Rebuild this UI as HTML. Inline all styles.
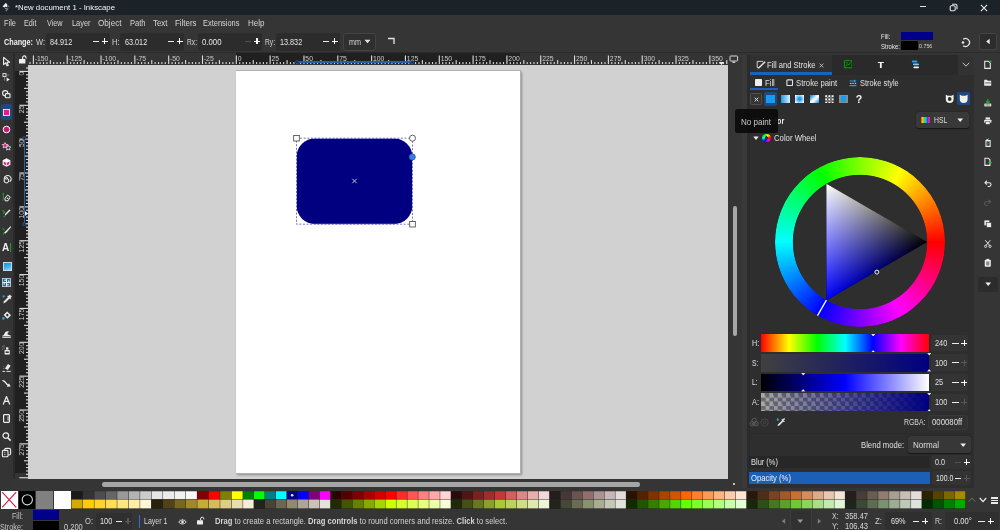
<!DOCTYPE html>
<html><head><meta charset="utf-8"><title>New document 1 - Inkscape</title>
<style>
html,body{margin:0;padding:0;background:#353535;}
body{width:1000px;height:530px;position:relative;overflow:hidden;font-family:"Liberation Sans",sans-serif;}
.r{position:absolute;display:block;}
.t{position:absolute;white-space:nowrap;filter:grayscale(1);}
</style></head><body>
<div class="r" style="left:0.00px;top:0.00px;width:1000.00px;height:14.50px;background:#1c222a;"></div>
<div class="r" style="left:0.00px;top:14.50px;width:1000.00px;height:38.00px;background:#353535;"></div>
<div class="r" style="left:0.00px;top:51.80px;width:1000.00px;height:1.20px;background:#2b2b2b;"></div>
<svg class="r" style="left:1.50px;top:2.00px;" width="10" height="10" viewBox="0 0 10 10"><path d="M3.9 0.7 L0.6 4.6 L2.4 5.5 L3.8 4.5 L5 5.5 L5.5 3.3 Z" fill="#f2f2f2"/><path d="M3.9 0.7 L5.5 3.3 L5 5.5 L6.6 4.9 L8.5 5.6 Z" fill="#4e5f82"/><path d="M2.4 6.5 L5.8 6 L6.6 7.1 L4.4 9.5 L3 8.3 L4.6 7.6 Z" fill="#70747a"/><path d="M2.6 6.4 L4.4 5.9 L4 6.8Z" fill="#d8d8d8"/></svg>
<div class="t" style="left:15.30px;top:1.90px;font-size:8.00px;line-height:12px;color:#f4f4f4;transform-origin:0 50%;transform:scaleX(0.9778);">*New document 1 - Inkscape</div>
<div class="r" style="left:920.00px;top:6.30px;width:6.20px;height:1.10px;background:#e4e4e4;"></div>
<svg class="r" style="left:948.50px;top:3.00px;" width="9" height="9" viewBox="0 0 9 9"><rect x="1.2" y="2.8" width="5" height="5" rx="1.2" fill="none" stroke="#e4e4e4" stroke-width="1.1"/><path d="M3 1.3 H6.6 A1.4 1.4 0 0 1 8 2.7 V6.2" fill="none" stroke="#e4e4e4" stroke-width="1.1"/></svg>
<svg class="r" style="left:980.00px;top:3.60px;" width="8" height="8" viewBox="0 0 8 8"><path d="M0.9 0.9 L7.1 7.1 M7.1 0.9 L0.9 7.1" stroke="#ececec" stroke-width="1.1" fill="none"/></svg>
<div class="t" style="left:4.20px;top:16.90px;font-size:8.80px;line-height:12px;color:#d6d6d6;transform-origin:0 50%;transform:scaleX(0.8462);">File</div>
<div class="t" style="left:24.00px;top:16.90px;font-size:8.80px;line-height:12px;color:#d6d6d6;transform-origin:0 50%;transform:scaleX(0.8243);">Edit</div>
<div class="t" style="left:46.50px;top:16.90px;font-size:8.80px;line-height:12px;color:#d6d6d6;transform-origin:0 50%;transform:scaleX(0.8194);">View</div>
<div class="t" style="left:71.50px;top:16.90px;font-size:8.80px;line-height:12px;color:#d6d6d6;transform-origin:0 50%;transform:scaleX(0.8404);">Layer</div>
<div class="t" style="left:98.00px;top:16.90px;font-size:8.80px;line-height:12px;color:#d6d6d6;transform-origin:0 50%;transform:scaleX(0.9240);">Object</div>
<div class="t" style="left:129.50px;top:16.90px;font-size:8.80px;line-height:12px;color:#d6d6d6;transform-origin:0 50%;transform:scaleX(0.8562);">Path</div>
<div class="t" style="left:152.50px;top:16.90px;font-size:8.80px;line-height:12px;color:#d6d6d6;transform-origin:0 50%;transform:scaleX(0.8984);">Text</div>
<div class="t" style="left:174.50px;top:16.90px;font-size:8.80px;line-height:12px;color:#d6d6d6;transform-origin:0 50%;transform:scaleX(0.8975);">Filters</div>
<div class="t" style="left:203.00px;top:16.90px;font-size:8.80px;line-height:12px;color:#d6d6d6;transform-origin:0 50%;transform:scaleX(0.8479);">Extensions</div>
<div class="t" style="left:247.50px;top:16.90px;font-size:8.80px;line-height:12px;color:#d6d6d6;transform-origin:0 50%;transform:scaleX(0.9116);">Help</div>
<div class="t" style="left:4.00px;top:35.70px;font-size:8.60px;line-height:12px;color:#f0f0f0;font-weight:bold;transform-origin:0 50%;transform:scaleX(0.8430);">Change:</div>
<div class="t" style="left:35.50px;top:35.70px;font-size:8.60px;line-height:12px;color:#d6d6d6;transform-origin:0 50%;transform:scaleX(0.8695);">W:</div>
<div class="r" style="left:46.00px;top:33.00px;width:63.60px;height:17.60px;background:#2c2c2c;border-radius:2.5px;"></div>
<div class="t" style="left:49.50px;top:35.70px;font-size:8.60px;line-height:12px;color:#e6e6e6;transform-origin:0 50%;transform:scaleX(0.8440);">84.912</div>
<div class="r" style="left:92.50px;top:40.80px;width:6.40px;height:1.20px;background:#ececec;"></div>
<div class="r" style="left:101.70px;top:40.80px;width:6.20px;height:1.20px;background:#ffffff;"></div>
<div class="r" style="left:104.20px;top:38.30px;width:1.20px;height:6.20px;background:#ffffff;"></div>
<div class="t" style="left:112.00px;top:35.70px;font-size:8.60px;line-height:12px;color:#d6d6d6;transform-origin:0 50%;transform:scaleX(0.8721);">H:</div>
<div class="r" style="left:120.30px;top:33.00px;width:64.00px;height:17.60px;background:#2c2c2c;border-radius:2.5px;"></div>
<div class="t" style="left:124.50px;top:35.70px;font-size:8.60px;line-height:12px;color:#e6e6e6;transform-origin:0 50%;transform:scaleX(0.8440);">63.012</div>
<div class="r" style="left:167.50px;top:40.80px;width:6.40px;height:1.20px;background:#ececec;"></div>
<div class="r" style="left:176.70px;top:40.80px;width:6.20px;height:1.20px;background:#ffffff;"></div>
<div class="r" style="left:179.20px;top:38.30px;width:1.20px;height:6.20px;background:#ffffff;"></div>
<div class="t" style="left:187.00px;top:35.70px;font-size:8.60px;line-height:12px;color:#d6d6d6;transform-origin:0 50%;transform:scaleX(0.7752);">Rx:</div>
<div class="r" style="left:197.60px;top:33.00px;width:64.00px;height:17.60px;background:#2c2c2c;border-radius:2.5px;"></div>
<div class="t" style="left:202.00px;top:35.70px;font-size:8.60px;line-height:12px;color:#e6e6e6;transform-origin:0 50%;transform:scaleX(0.9061);">0.000</div>
<div class="r" style="left:244.70px;top:40.80px;width:6.40px;height:1.20px;background:#525252;"></div>
<div class="r" style="left:253.90px;top:40.80px;width:6.20px;height:1.20px;background:#ffffff;"></div>
<div class="r" style="left:256.40px;top:38.30px;width:1.20px;height:6.20px;background:#ffffff;"></div>
<div class="t" style="left:265.00px;top:35.70px;font-size:8.60px;line-height:12px;color:#d6d6d6;transform-origin:0 50%;transform:scaleX(0.7752);">Ry:</div>
<div class="r" style="left:275.60px;top:33.00px;width:64.00px;height:17.60px;background:#2c2c2c;border-radius:2.5px;"></div>
<div class="t" style="left:279.50px;top:35.70px;font-size:8.60px;line-height:12px;color:#e6e6e6;transform-origin:0 50%;transform:scaleX(0.8440);">13.832</div>
<div class="r" style="left:322.50px;top:40.80px;width:6.40px;height:1.20px;background:#ececec;"></div>
<div class="r" style="left:331.70px;top:40.80px;width:6.20px;height:1.20px;background:#ffffff;"></div>
<div class="r" style="left:334.20px;top:38.30px;width:1.20px;height:6.20px;background:#ffffff;"></div>
<div class="r" style="left:342.60px;top:32.50px;width:33.80px;height:18.00px;background:#2f2f2f;border-radius:3px;border:0.6px solid #434343;box-sizing:border-box;"></div>
<div class="t" style="left:348.50px;top:35.70px;font-size:8.60px;line-height:12px;color:#d6d6d6;transform-origin:0 50%;transform:scaleX(0.8375);">mm</div>
<svg class="r" style="left:364.40px;top:39.40px;" width="6.4" height="4.6" viewBox="0 0 6.4 4.6"><path d="M0.5 0.8 H6.5 L3.5 4.2Z" fill="#e6e6e6"/></svg>
<svg class="r" style="left:387.00px;top:37.00px;" width="9" height="8" viewBox="0 0 9 8"><path d="M1 1.5 H7 V7" fill="none" stroke="#e6e6e6" stroke-width="1.3"/></svg>
<div class="t" style="left:880.80px;top:31.00px;font-size:7.20px;line-height:11px;color:#e8e8e8;transform-origin:0 50%;transform:scaleX(0.8395);">Fill:</div>
<div class="r" style="left:901.00px;top:31.90px;width:15.80px;height:8.30px;background:#00008b;"></div>
<div class="r" style="left:917.10px;top:31.90px;width:16.00px;height:8.30px;background:#00008b;"></div>
<div class="t" style="left:880.80px;top:40.70px;font-size:7.20px;line-height:11px;color:#e8e8e8;transform-origin:0 50%;transform:scaleX(0.8286);">Stroke:</div>
<div class="r" style="left:901.00px;top:41.40px;width:16.50px;height:8.30px;background:#000;border-radius:1.2px;"></div>
<div class="t" style="left:919.20px;top:41.50px;font-size:5.60px;line-height:9px;color:#d4d4d4;transform-origin:0 50%;transform:scaleX(0.9491);">0.756</div>
<svg class="r" style="left:960.00px;top:36.50px;" width="11" height="11" viewBox="0 0 11 11"><path d="M3.2 2.2 A4 4 0 1 1 3.2 8.8" fill="none" stroke="#e6e6e6" stroke-width="1.3"/><circle cx="3" cy="5.5" r="1.3" fill="#e6e6e6"/></svg>
<div class="r" style="left:979.00px;top:32.50px;width:18.00px;height:17.00px;background:#2c2c2c;border-radius:2.5px;border:0.6px solid #434343;box-sizing:border-box;"></div>
<svg class="r" style="left:985.00px;top:38.00px;" width="6" height="7" viewBox="0 0 6 7"><path d="M4.6 0.8 V6.2 L1.2 3.5Z" fill="#f0f0f0"/></svg>
<div class="r" style="left:27.80px;top:64.50px;width:700.20px;height:414.40px;background:#d1d1d1;"></div>
<div class="r" style="left:237.30px;top:71.95px;width:284.79px;height:403.21px;background:#8c8c8c;filter:blur(0.8px);"></div>
<div class="r" style="left:235.70px;top:70.35px;width:284.99px;height:403.41px;background:#b0b0b0;"></div>
<div class="r" style="left:236.10px;top:70.75px;width:284.19px;height:402.61px;background:#ffffff;"></div>
<div class="r" style="left:27.80px;top:53.20px;width:700.20px;height:11.30px;background:#343434;"></div>
<div class="r" style="left:236.10px;top:53.20px;width:284.19px;height:11.30px;background:#202020;"></div>
<svg class="r" style="left:27.80px;top:53.20px;" width="700.2" height="11.3" viewBox="0 0 700.2 11.3"><g fill="#dedede"><rect x="1.37" y="9.10" width="1.1" height="2.20"/><rect x="4.75" y="2.50" width="1.1" height="8.80"/><rect x="8.14" y="9.10" width="1.1" height="2.20"/><rect x="11.52" y="9.10" width="1.1" height="2.20"/><rect x="14.90" y="9.10" width="1.1" height="2.20"/><rect x="18.29" y="9.10" width="1.1" height="2.20"/><rect x="21.67" y="7.10" width="1.1" height="4.20"/><rect x="25.05" y="9.10" width="1.1" height="2.20"/><rect x="28.44" y="9.10" width="1.1" height="2.20"/><rect x="31.82" y="9.10" width="1.1" height="2.20"/><rect x="35.20" y="9.10" width="1.1" height="2.20"/><rect x="38.59" y="2.50" width="1.1" height="8.80"/><rect x="41.97" y="9.10" width="1.1" height="2.20"/><rect x="45.35" y="9.10" width="1.1" height="2.20"/><rect x="48.74" y="9.10" width="1.1" height="2.20"/><rect x="52.12" y="9.10" width="1.1" height="2.20"/><rect x="55.50" y="7.10" width="1.1" height="4.20"/><rect x="58.89" y="9.10" width="1.1" height="2.20"/><rect x="62.27" y="9.10" width="1.1" height="2.20"/><rect x="65.65" y="9.10" width="1.1" height="2.20"/><rect x="69.04" y="9.10" width="1.1" height="2.20"/><rect x="72.42" y="2.50" width="1.1" height="8.80"/><rect x="75.80" y="9.10" width="1.1" height="2.20"/><rect x="79.19" y="9.10" width="1.1" height="2.20"/><rect x="82.57" y="9.10" width="1.1" height="2.20"/><rect x="85.95" y="9.10" width="1.1" height="2.20"/><rect x="89.34" y="7.10" width="1.1" height="4.20"/><rect x="92.72" y="9.10" width="1.1" height="2.20"/><rect x="96.10" y="9.10" width="1.1" height="2.20"/><rect x="99.49" y="9.10" width="1.1" height="2.20"/><rect x="102.87" y="9.10" width="1.1" height="2.20"/><rect x="106.25" y="2.50" width="1.1" height="8.80"/><rect x="109.64" y="9.10" width="1.1" height="2.20"/><rect x="113.02" y="9.10" width="1.1" height="2.20"/><rect x="116.40" y="9.10" width="1.1" height="2.20"/><rect x="119.79" y="9.10" width="1.1" height="2.20"/><rect x="123.17" y="7.10" width="1.1" height="4.20"/><rect x="126.55" y="9.10" width="1.1" height="2.20"/><rect x="129.94" y="9.10" width="1.1" height="2.20"/><rect x="133.32" y="9.10" width="1.1" height="2.20"/><rect x="136.70" y="9.10" width="1.1" height="2.20"/><rect x="140.08" y="2.50" width="1.1" height="8.80"/><rect x="143.47" y="9.10" width="1.1" height="2.20"/><rect x="146.85" y="9.10" width="1.1" height="2.20"/><rect x="150.23" y="9.10" width="1.1" height="2.20"/><rect x="153.62" y="9.10" width="1.1" height="2.20"/><rect x="157.00" y="7.10" width="1.1" height="4.20"/><rect x="160.38" y="9.10" width="1.1" height="2.20"/><rect x="163.77" y="9.10" width="1.1" height="2.20"/><rect x="167.15" y="9.10" width="1.1" height="2.20"/><rect x="170.53" y="9.10" width="1.1" height="2.20"/><rect x="173.92" y="2.50" width="1.1" height="8.80"/><rect x="177.30" y="9.10" width="1.1" height="2.20"/><rect x="180.68" y="9.10" width="1.1" height="2.20"/><rect x="184.07" y="9.10" width="1.1" height="2.20"/><rect x="187.45" y="9.10" width="1.1" height="2.20"/><rect x="190.83" y="7.10" width="1.1" height="4.20"/><rect x="194.22" y="9.10" width="1.1" height="2.20"/><rect x="197.60" y="9.10" width="1.1" height="2.20"/><rect x="200.98" y="9.10" width="1.1" height="2.20"/><rect x="204.37" y="9.10" width="1.1" height="2.20"/><rect x="207.75" y="2.50" width="1.1" height="8.80"/><rect x="211.13" y="9.10" width="1.1" height="2.20"/><rect x="214.52" y="9.10" width="1.1" height="2.20"/><rect x="217.90" y="9.10" width="1.1" height="2.20"/><rect x="221.28" y="9.10" width="1.1" height="2.20"/><rect x="224.67" y="7.10" width="1.1" height="4.20"/><rect x="228.05" y="9.10" width="1.1" height="2.20"/><rect x="231.43" y="9.10" width="1.1" height="2.20"/><rect x="234.82" y="9.10" width="1.1" height="2.20"/><rect x="238.20" y="9.10" width="1.1" height="2.20"/><rect x="241.58" y="2.50" width="1.1" height="8.80"/><rect x="244.97" y="9.10" width="1.1" height="2.20"/><rect x="248.35" y="9.10" width="1.1" height="2.20"/><rect x="251.73" y="9.10" width="1.1" height="2.20"/><rect x="255.12" y="9.10" width="1.1" height="2.20"/><rect x="258.50" y="7.10" width="1.1" height="4.20"/><rect x="261.88" y="9.10" width="1.1" height="2.20"/><rect x="265.27" y="9.10" width="1.1" height="2.20"/><rect x="268.65" y="9.10" width="1.1" height="2.20"/><rect x="272.03" y="9.10" width="1.1" height="2.20"/><rect x="275.41" y="2.50" width="1.1" height="8.80"/><rect x="278.80" y="9.10" width="1.1" height="2.20"/><rect x="282.18" y="9.10" width="1.1" height="2.20"/><rect x="285.56" y="9.10" width="1.1" height="2.20"/><rect x="288.95" y="9.10" width="1.1" height="2.20"/><rect x="292.33" y="7.10" width="1.1" height="4.20"/><rect x="295.71" y="9.10" width="1.1" height="2.20"/><rect x="299.10" y="9.10" width="1.1" height="2.20"/><rect x="302.48" y="9.10" width="1.1" height="2.20"/><rect x="305.86" y="9.10" width="1.1" height="2.20"/><rect x="309.25" y="2.50" width="1.1" height="8.80"/><rect x="312.63" y="9.10" width="1.1" height="2.20"/><rect x="316.01" y="9.10" width="1.1" height="2.20"/><rect x="319.40" y="9.10" width="1.1" height="2.20"/><rect x="322.78" y="9.10" width="1.1" height="2.20"/><rect x="326.16" y="7.10" width="1.1" height="4.20"/><rect x="329.55" y="9.10" width="1.1" height="2.20"/><rect x="332.93" y="9.10" width="1.1" height="2.20"/><rect x="336.31" y="9.10" width="1.1" height="2.20"/><rect x="339.70" y="9.10" width="1.1" height="2.20"/><rect x="343.08" y="2.50" width="1.1" height="8.80"/><rect x="346.46" y="9.10" width="1.1" height="2.20"/><rect x="349.85" y="9.10" width="1.1" height="2.20"/><rect x="353.23" y="9.10" width="1.1" height="2.20"/><rect x="356.61" y="9.10" width="1.1" height="2.20"/><rect x="360.00" y="7.10" width="1.1" height="4.20"/><rect x="363.38" y="9.10" width="1.1" height="2.20"/><rect x="366.76" y="9.10" width="1.1" height="2.20"/><rect x="370.15" y="9.10" width="1.1" height="2.20"/><rect x="373.53" y="9.10" width="1.1" height="2.20"/><rect x="376.91" y="2.50" width="1.1" height="8.80"/><rect x="380.30" y="9.10" width="1.1" height="2.20"/><rect x="383.68" y="9.10" width="1.1" height="2.20"/><rect x="387.06" y="9.10" width="1.1" height="2.20"/><rect x="390.45" y="9.10" width="1.1" height="2.20"/><rect x="393.83" y="7.10" width="1.1" height="4.20"/><rect x="397.21" y="9.10" width="1.1" height="2.20"/><rect x="400.60" y="9.10" width="1.1" height="2.20"/><rect x="403.98" y="9.10" width="1.1" height="2.20"/><rect x="407.36" y="9.10" width="1.1" height="2.20"/><rect x="410.75" y="2.50" width="1.1" height="8.80"/><rect x="414.13" y="9.10" width="1.1" height="2.20"/><rect x="417.51" y="9.10" width="1.1" height="2.20"/><rect x="420.89" y="9.10" width="1.1" height="2.20"/><rect x="424.28" y="9.10" width="1.1" height="2.20"/><rect x="427.66" y="7.10" width="1.1" height="4.20"/><rect x="431.04" y="9.10" width="1.1" height="2.20"/><rect x="434.43" y="9.10" width="1.1" height="2.20"/><rect x="437.81" y="9.10" width="1.1" height="2.20"/><rect x="441.19" y="9.10" width="1.1" height="2.20"/><rect x="444.58" y="2.50" width="1.1" height="8.80"/><rect x="447.96" y="9.10" width="1.1" height="2.20"/><rect x="451.34" y="9.10" width="1.1" height="2.20"/><rect x="454.73" y="9.10" width="1.1" height="2.20"/><rect x="458.11" y="9.10" width="1.1" height="2.20"/><rect x="461.49" y="7.10" width="1.1" height="4.20"/><rect x="464.88" y="9.10" width="1.1" height="2.20"/><rect x="468.26" y="9.10" width="1.1" height="2.20"/><rect x="471.64" y="9.10" width="1.1" height="2.20"/><rect x="475.03" y="9.10" width="1.1" height="2.20"/><rect x="478.41" y="2.50" width="1.1" height="8.80"/><rect x="481.79" y="9.10" width="1.1" height="2.20"/><rect x="485.18" y="9.10" width="1.1" height="2.20"/><rect x="488.56" y="9.10" width="1.1" height="2.20"/><rect x="491.94" y="9.10" width="1.1" height="2.20"/><rect x="495.33" y="7.10" width="1.1" height="4.20"/><rect x="498.71" y="9.10" width="1.1" height="2.20"/><rect x="502.09" y="9.10" width="1.1" height="2.20"/><rect x="505.48" y="9.10" width="1.1" height="2.20"/><rect x="508.86" y="9.10" width="1.1" height="2.20"/><rect x="512.24" y="2.50" width="1.1" height="8.80"/><rect x="515.63" y="9.10" width="1.1" height="2.20"/><rect x="519.01" y="9.10" width="1.1" height="2.20"/><rect x="522.39" y="9.10" width="1.1" height="2.20"/><rect x="525.78" y="9.10" width="1.1" height="2.20"/><rect x="529.16" y="7.10" width="1.1" height="4.20"/><rect x="532.54" y="9.10" width="1.1" height="2.20"/><rect x="535.93" y="9.10" width="1.1" height="2.20"/><rect x="539.31" y="9.10" width="1.1" height="2.20"/><rect x="542.69" y="9.10" width="1.1" height="2.20"/><rect x="546.08" y="2.50" width="1.1" height="8.80"/><rect x="549.46" y="9.10" width="1.1" height="2.20"/><rect x="552.84" y="9.10" width="1.1" height="2.20"/><rect x="556.22" y="9.10" width="1.1" height="2.20"/><rect x="559.61" y="9.10" width="1.1" height="2.20"/><rect x="562.99" y="7.10" width="1.1" height="4.20"/><rect x="566.37" y="9.10" width="1.1" height="2.20"/><rect x="569.76" y="9.10" width="1.1" height="2.20"/><rect x="573.14" y="9.10" width="1.1" height="2.20"/><rect x="576.52" y="9.10" width="1.1" height="2.20"/><rect x="579.91" y="2.50" width="1.1" height="8.80"/><rect x="583.29" y="9.10" width="1.1" height="2.20"/><rect x="586.67" y="9.10" width="1.1" height="2.20"/><rect x="590.06" y="9.10" width="1.1" height="2.20"/><rect x="593.44" y="9.10" width="1.1" height="2.20"/><rect x="596.82" y="7.10" width="1.1" height="4.20"/><rect x="600.21" y="9.10" width="1.1" height="2.20"/><rect x="603.59" y="9.10" width="1.1" height="2.20"/><rect x="606.97" y="9.10" width="1.1" height="2.20"/><rect x="610.36" y="9.10" width="1.1" height="2.20"/><rect x="613.74" y="2.50" width="1.1" height="8.80"/><rect x="617.12" y="9.10" width="1.1" height="2.20"/><rect x="620.51" y="9.10" width="1.1" height="2.20"/><rect x="623.89" y="9.10" width="1.1" height="2.20"/><rect x="627.27" y="9.10" width="1.1" height="2.20"/><rect x="630.66" y="7.10" width="1.1" height="4.20"/><rect x="634.04" y="9.10" width="1.1" height="2.20"/><rect x="637.42" y="9.10" width="1.1" height="2.20"/><rect x="640.81" y="9.10" width="1.1" height="2.20"/><rect x="644.19" y="9.10" width="1.1" height="2.20"/><rect x="647.57" y="2.50" width="1.1" height="8.80"/><rect x="650.96" y="9.10" width="1.1" height="2.20"/><rect x="654.34" y="9.10" width="1.1" height="2.20"/><rect x="657.72" y="9.10" width="1.1" height="2.20"/><rect x="661.11" y="9.10" width="1.1" height="2.20"/><rect x="664.49" y="7.10" width="1.1" height="4.20"/><rect x="667.87" y="9.10" width="1.1" height="2.20"/><rect x="671.26" y="9.10" width="1.1" height="2.20"/><rect x="674.64" y="9.10" width="1.1" height="2.20"/><rect x="678.02" y="9.10" width="1.1" height="2.20"/><rect x="681.41" y="2.50" width="1.1" height="8.80"/><rect x="684.79" y="9.10" width="1.1" height="2.20"/><rect x="688.17" y="9.10" width="1.1" height="2.20"/><rect x="691.55" y="9.10" width="1.1" height="2.20"/><rect x="694.94" y="9.10" width="1.1" height="2.20"/><rect x="698.32" y="7.10" width="1.1" height="4.20"/></g></svg>
<div class="t" style="left:34.70px;top:54.00px;font-size:6.80px;line-height:10px;color:#cccccc;">-150</div>
<div class="t" style="left:68.54px;top:54.00px;font-size:6.80px;line-height:10px;color:#cccccc;">-125</div>
<div class="t" style="left:102.37px;top:54.00px;font-size:6.80px;line-height:10px;color:#cccccc;">-100</div>
<div class="t" style="left:136.20px;top:54.00px;font-size:6.80px;line-height:10px;color:#cccccc;">-75</div>
<div class="t" style="left:170.03px;top:54.00px;font-size:6.80px;line-height:10px;color:#cccccc;">-50</div>
<div class="t" style="left:203.87px;top:54.00px;font-size:6.80px;line-height:10px;color:#cccccc;">-25</div>
<div class="t" style="left:237.70px;top:54.00px;font-size:6.80px;line-height:10px;color:#cccccc;">0</div>
<div class="t" style="left:271.53px;top:54.00px;font-size:6.80px;line-height:10px;color:#cccccc;">25</div>
<div class="t" style="left:305.37px;top:54.00px;font-size:6.80px;line-height:10px;color:#cccccc;">50</div>
<div class="t" style="left:339.20px;top:54.00px;font-size:6.80px;line-height:10px;color:#cccccc;">75</div>
<div class="t" style="left:373.03px;top:54.00px;font-size:6.80px;line-height:10px;color:#cccccc;">100</div>
<div class="t" style="left:406.86px;top:54.00px;font-size:6.80px;line-height:10px;color:#cccccc;">125</div>
<div class="t" style="left:440.70px;top:54.00px;font-size:6.80px;line-height:10px;color:#cccccc;">150</div>
<div class="t" style="left:474.53px;top:54.00px;font-size:6.80px;line-height:10px;color:#cccccc;">175</div>
<div class="t" style="left:508.36px;top:54.00px;font-size:6.80px;line-height:10px;color:#cccccc;">200</div>
<div class="t" style="left:542.19px;top:54.00px;font-size:6.80px;line-height:10px;color:#cccccc;">225</div>
<div class="t" style="left:576.02px;top:54.00px;font-size:6.80px;line-height:10px;color:#cccccc;">250</div>
<div class="t" style="left:609.86px;top:54.00px;font-size:6.80px;line-height:10px;color:#cccccc;">275</div>
<div class="t" style="left:643.69px;top:54.00px;font-size:6.80px;line-height:10px;color:#cccccc;">300</div>
<div class="t" style="left:677.52px;top:54.00px;font-size:6.80px;line-height:10px;color:#cccccc;">325</div>
<div class="t" style="left:711.36px;top:54.00px;font-size:6.80px;line-height:10px;color:#cccccc;">350</div>
<div class="r" style="left:296.50px;top:61.10px;width:116.00px;height:1.50px;background:#2a5ea8;"></div>
<svg class="r" style="left:294.50px;top:59.60px;" width="4.4" height="4.4" viewBox="0 0 4.4 4.4"><circle cx="2.2" cy="2.2" r="1.5" fill="#202020" stroke="#2a5ea8" stroke-width="0.9"/></svg>
<svg class="r" style="left:410.30px;top:59.60px;" width="4.4" height="4.4" viewBox="0 0 4.4 4.4"><circle cx="2.2" cy="2.2" r="1.5" fill="#202020" stroke="#2a5ea8" stroke-width="0.9"/></svg>
<svg class="r" style="left:718.50px;top:62.00px;" width="5" height="3" viewBox="0 0 5 3"><path d="M0 0 H5 L2.5 3Z" fill="#f0f0f0"/></svg>
<div class="r" style="left:14.60px;top:64.50px;width:13.20px;height:414.40px;background:#343434;"></div>
<div class="r" style="left:14.60px;top:70.75px;width:13.20px;height:402.61px;background:#202020;"></div>
<svg class="r" style="left:14.60px;top:64.50px;" width="13.2" height="414.4" viewBox="0 0 13.2 414.4"><g fill="#dedede"><rect x="11.00" y="2.31" width="2.20" height="1.1"/><rect x="4.40" y="5.70" width="8.80" height="1.1"/><rect x="11.00" y="9.09" width="2.20" height="1.1"/><rect x="11.00" y="12.48" width="2.20" height="1.1"/><rect x="11.00" y="15.87" width="2.20" height="1.1"/><rect x="11.00" y="19.26" width="2.20" height="1.1"/><rect x="9.00" y="22.64" width="4.20" height="1.1"/><rect x="11.00" y="26.03" width="2.20" height="1.1"/><rect x="11.00" y="29.42" width="2.20" height="1.1"/><rect x="11.00" y="32.81" width="2.20" height="1.1"/><rect x="11.00" y="36.20" width="2.20" height="1.1"/><rect x="4.40" y="39.59" width="8.80" height="1.1"/><rect x="11.00" y="42.98" width="2.20" height="1.1"/><rect x="11.00" y="46.37" width="2.20" height="1.1"/><rect x="11.00" y="49.76" width="2.20" height="1.1"/><rect x="11.00" y="53.15" width="2.20" height="1.1"/><rect x="9.00" y="56.53" width="4.20" height="1.1"/><rect x="11.00" y="59.92" width="2.20" height="1.1"/><rect x="11.00" y="63.31" width="2.20" height="1.1"/><rect x="11.00" y="66.70" width="2.20" height="1.1"/><rect x="11.00" y="70.09" width="2.20" height="1.1"/><rect x="4.40" y="73.48" width="8.80" height="1.1"/><rect x="11.00" y="76.87" width="2.20" height="1.1"/><rect x="11.00" y="80.26" width="2.20" height="1.1"/><rect x="11.00" y="83.65" width="2.20" height="1.1"/><rect x="11.00" y="87.04" width="2.20" height="1.1"/><rect x="9.00" y="90.42" width="4.20" height="1.1"/><rect x="11.00" y="93.81" width="2.20" height="1.1"/><rect x="11.00" y="97.20" width="2.20" height="1.1"/><rect x="11.00" y="100.59" width="2.20" height="1.1"/><rect x="11.00" y="103.98" width="2.20" height="1.1"/><rect x="4.40" y="107.37" width="8.80" height="1.1"/><rect x="11.00" y="110.76" width="2.20" height="1.1"/><rect x="11.00" y="114.15" width="2.20" height="1.1"/><rect x="11.00" y="117.54" width="2.20" height="1.1"/><rect x="11.00" y="120.93" width="2.20" height="1.1"/><rect x="9.00" y="124.32" width="4.20" height="1.1"/><rect x="11.00" y="127.70" width="2.20" height="1.1"/><rect x="11.00" y="131.09" width="2.20" height="1.1"/><rect x="11.00" y="134.48" width="2.20" height="1.1"/><rect x="11.00" y="137.87" width="2.20" height="1.1"/><rect x="4.40" y="141.26" width="8.80" height="1.1"/><rect x="11.00" y="144.65" width="2.20" height="1.1"/><rect x="11.00" y="148.04" width="2.20" height="1.1"/><rect x="11.00" y="151.43" width="2.20" height="1.1"/><rect x="11.00" y="154.82" width="2.20" height="1.1"/><rect x="9.00" y="158.20" width="4.20" height="1.1"/><rect x="11.00" y="161.59" width="2.20" height="1.1"/><rect x="11.00" y="164.98" width="2.20" height="1.1"/><rect x="11.00" y="168.37" width="2.20" height="1.1"/><rect x="11.00" y="171.76" width="2.20" height="1.1"/><rect x="4.40" y="175.15" width="8.80" height="1.1"/><rect x="11.00" y="178.54" width="2.20" height="1.1"/><rect x="11.00" y="181.93" width="2.20" height="1.1"/><rect x="11.00" y="185.32" width="2.20" height="1.1"/><rect x="11.00" y="188.71" width="2.20" height="1.1"/><rect x="9.00" y="192.09" width="4.20" height="1.1"/><rect x="11.00" y="195.48" width="2.20" height="1.1"/><rect x="11.00" y="198.87" width="2.20" height="1.1"/><rect x="11.00" y="202.26" width="2.20" height="1.1"/><rect x="11.00" y="205.65" width="2.20" height="1.1"/><rect x="4.40" y="209.04" width="8.80" height="1.1"/><rect x="11.00" y="212.43" width="2.20" height="1.1"/><rect x="11.00" y="215.82" width="2.20" height="1.1"/><rect x="11.00" y="219.21" width="2.20" height="1.1"/><rect x="11.00" y="222.60" width="2.20" height="1.1"/><rect x="9.00" y="225.98" width="4.20" height="1.1"/><rect x="11.00" y="229.37" width="2.20" height="1.1"/><rect x="11.00" y="232.76" width="2.20" height="1.1"/><rect x="11.00" y="236.15" width="2.20" height="1.1"/><rect x="11.00" y="239.54" width="2.20" height="1.1"/><rect x="4.40" y="242.93" width="8.80" height="1.1"/><rect x="11.00" y="246.32" width="2.20" height="1.1"/><rect x="11.00" y="249.71" width="2.20" height="1.1"/><rect x="11.00" y="253.10" width="2.20" height="1.1"/><rect x="11.00" y="256.49" width="2.20" height="1.1"/><rect x="9.00" y="259.87" width="4.20" height="1.1"/><rect x="11.00" y="263.26" width="2.20" height="1.1"/><rect x="11.00" y="266.65" width="2.20" height="1.1"/><rect x="11.00" y="270.04" width="2.20" height="1.1"/><rect x="11.00" y="273.43" width="2.20" height="1.1"/><rect x="4.40" y="276.82" width="8.80" height="1.1"/><rect x="11.00" y="280.21" width="2.20" height="1.1"/><rect x="11.00" y="283.60" width="2.20" height="1.1"/><rect x="11.00" y="286.99" width="2.20" height="1.1"/><rect x="11.00" y="290.38" width="2.20" height="1.1"/><rect x="9.00" y="293.76" width="4.20" height="1.1"/><rect x="11.00" y="297.15" width="2.20" height="1.1"/><rect x="11.00" y="300.54" width="2.20" height="1.1"/><rect x="11.00" y="303.93" width="2.20" height="1.1"/><rect x="11.00" y="307.32" width="2.20" height="1.1"/><rect x="4.40" y="310.71" width="8.80" height="1.1"/><rect x="11.00" y="314.10" width="2.20" height="1.1"/><rect x="11.00" y="317.49" width="2.20" height="1.1"/><rect x="11.00" y="320.88" width="2.20" height="1.1"/><rect x="11.00" y="324.27" width="2.20" height="1.1"/><rect x="9.00" y="327.65" width="4.20" height="1.1"/><rect x="11.00" y="331.04" width="2.20" height="1.1"/><rect x="11.00" y="334.43" width="2.20" height="1.1"/><rect x="11.00" y="337.82" width="2.20" height="1.1"/><rect x="11.00" y="341.21" width="2.20" height="1.1"/><rect x="4.40" y="344.60" width="8.80" height="1.1"/><rect x="11.00" y="347.99" width="2.20" height="1.1"/><rect x="11.00" y="351.38" width="2.20" height="1.1"/><rect x="11.00" y="354.77" width="2.20" height="1.1"/><rect x="11.00" y="358.16" width="2.20" height="1.1"/><rect x="9.00" y="361.54" width="4.20" height="1.1"/><rect x="11.00" y="364.93" width="2.20" height="1.1"/><rect x="11.00" y="368.32" width="2.20" height="1.1"/><rect x="11.00" y="371.71" width="2.20" height="1.1"/><rect x="11.00" y="375.10" width="2.20" height="1.1"/><rect x="4.40" y="378.49" width="8.80" height="1.1"/><rect x="11.00" y="381.88" width="2.20" height="1.1"/><rect x="11.00" y="385.27" width="2.20" height="1.1"/><rect x="11.00" y="388.66" width="2.20" height="1.1"/><rect x="11.00" y="392.05" width="2.20" height="1.1"/><rect x="9.00" y="395.43" width="4.20" height="1.1"/><rect x="11.00" y="398.82" width="2.20" height="1.1"/><rect x="11.00" y="402.21" width="2.20" height="1.1"/><rect x="11.00" y="405.60" width="2.20" height="1.1"/><rect x="11.00" y="408.99" width="2.20" height="1.1"/><rect x="4.40" y="412.38" width="8.80" height="1.1"/></g></svg>
<svg class="r" style="left:14.60px;top:64.50px;filter:grayscale(1);font-family:'Liberation Sans',sans-serif;" width="13.2" height="414.4" viewBox="0 0 13.2 414.4"><text transform="translate(9.30 6.45) rotate(-90)" font-size="6.9" fill="#cccccc" text-anchor="end">0</text><text transform="translate(9.30 40.34) rotate(-90)" font-size="6.9" fill="#cccccc" text-anchor="end">25</text><text transform="translate(9.30 74.23) rotate(-90)" font-size="6.9" fill="#cccccc" text-anchor="end">50</text><text transform="translate(9.30 108.12) rotate(-90)" font-size="6.9" fill="#cccccc" text-anchor="end">75</text><text transform="translate(9.30 142.01) rotate(-90)" font-size="6.9" fill="#cccccc" text-anchor="end">100</text><text transform="translate(9.30 175.90) rotate(-90)" font-size="6.9" fill="#cccccc" text-anchor="end">125</text><text transform="translate(9.30 209.79) rotate(-90)" font-size="6.9" fill="#cccccc" text-anchor="end">150</text><text transform="translate(9.30 243.68) rotate(-90)" font-size="6.9" fill="#cccccc" text-anchor="end">175</text><text transform="translate(9.30 277.57) rotate(-90)" font-size="6.9" fill="#cccccc" text-anchor="end">200</text><text transform="translate(9.30 311.46) rotate(-90)" font-size="6.9" fill="#cccccc" text-anchor="end">225</text><text transform="translate(9.30 345.35) rotate(-90)" font-size="6.9" fill="#cccccc" text-anchor="end">250</text><text transform="translate(9.30 379.24) rotate(-90)" font-size="6.9" fill="#cccccc" text-anchor="end">275</text></svg>
<div class="r" style="left:23.60px;top:138.00px;width:1.60px;height:86.00px;background:#2a5ea8;"></div>
<svg class="r" style="left:22.10px;top:135.80px;" width="4.4" height="4.4" viewBox="0 0 4.4 4.4"><circle cx="2.2" cy="2.2" r="1.5" fill="#202020" stroke="#2a5ea8" stroke-width="0.9"/></svg>
<svg class="r" style="left:22.10px;top:221.80px;" width="4.4" height="4.4" viewBox="0 0 4.4 4.4"><circle cx="2.2" cy="2.2" r="1.5" fill="#202020" stroke="#2a5ea8" stroke-width="0.9"/></svg>
<svg class="r" style="left:25.00px;top:210.50px;" width="3" height="5" viewBox="0 0 3 5"><path d="M0 0 V5 L3 2.5Z" fill="#f0f0f0"/></svg>
<svg class="r" style="left:18.00px;top:54.50px;" width="9" height="9" viewBox="0 0 9 9"><rect x="1" y="4" width="6.4" height="4.6" rx="0.6" fill="#f0f0f0"/><path d="M4.6 4 V2.6 A1.7 1.7 0 0 1 8 2.6 V3.4" fill="none" stroke="#f0f0f0" stroke-width="1.1"/></svg>
<svg class="r" style="left:286.00px;top:128.00px;" width="140" height="110" viewBox="0 0 140 110"><rect x="10.50" y="10.20" width="116.00" height="86.00" rx="18.8" ry="18.8" fill="#000080"/><rect x="10.50" y="10.20" width="116.00" height="86.00" fill="none" stroke="#ffffff" stroke-width="0.7"/><rect x="10.50" y="10.20" width="116.00" height="86.00" fill="none" stroke="#3a3ab8" stroke-width="0.7" stroke-dasharray="2 1.6"/><rect x="7.70" y="7.40" width="5.6" height="5.6" fill="#fff" stroke="#404040" stroke-width="0.8"/><rect x="123.70" y="93.40" width="5.6" height="5.6" fill="#fff" stroke="#404040" stroke-width="0.8"/><circle cx="126.50" cy="10.20" r="3" fill="#fff" stroke="#404040" stroke-width="0.8"/><circle cx="126.20" cy="29.00" r="3.1" fill="#2a7fff" stroke="#3a4a70" stroke-width="0.8"/><path d="M66.30 50.80 l4.4 4.4 m0 -4.4 l-4.4 4.4" stroke="#c4c4d0" stroke-width="1" fill="none"/></svg>
<div class="r" style="left:0.00px;top:478.90px;width:746.00px;height:11.50px;background:#353535;"></div>
<div class="r" style="left:102.00px;top:482.40px;width:538.00px;height:4.50px;background:#a6a6a6;border-radius:2.3px;"></div>
<div class="r" style="left:728.00px;top:53.00px;width:18.50px;height:437.00px;background:#353535;"></div>
<div class="r" style="left:732.60px;top:205.50px;width:4.20px;height:130.50px;background:#a6a6a6;border-radius:2.1px;"></div>
<div class="r" style="left:741.60px;top:267.60px;width:1.20px;height:1.20px;background:#e0e0e0;border-radius:1px;"></div>
<div class="r" style="left:741.60px;top:270.30px;width:1.20px;height:1.20px;background:#e0e0e0;border-radius:1px;"></div>
<div class="r" style="left:741.60px;top:273.00px;width:1.20px;height:1.20px;background:#e0e0e0;border-radius:1px;"></div>
<div class="r" style="left:732.80px;top:483.20px;width:1.80px;height:1.80px;background:#f0f0f0;border-radius:1px;"></div>
<svg class="r" style="left:729.00px;top:54.50px;" width="10" height="9" viewBox="0 0 10 9"><rect x="1" y="1" width="7.6" height="5" rx="0.8" fill="none" stroke="#d8d8d8" stroke-width="1"/><rect x="3.4" y="6.6" width="2.8" height="1.3" fill="#d8d8d8"/></svg>
<div class="r" style="left:0.00px;top:53.00px;width:14.60px;height:437.00px;background:#343434;"></div>
<div class="r" style="left:13.40px;top:53.00px;width:1.20px;height:426.00px;background:#2a2a2a;"></div>
<svg class="r" style="left:1.10px;top:55.50px;" width="11" height="11" viewBox="0 0 11 11"><path d="M2.6 1.4 L2.6 8.6 L4.6 6.9 L6 9.8 L7.3 9.2 L5.9 6.4 L8.6 6.2 Z" fill="none" stroke="#eeeeee" stroke-width="1.1" stroke-linejoin="round"/></svg>
<svg class="r" style="left:1.10px;top:72.10px;" width="11" height="11" viewBox="0 0 11 11"><rect x="2" y="1.6" width="3" height="3" fill="none" stroke="#eeeeee" stroke-width="0.9"/><path d="M5 3.1 H8.4 M3.5 4.6 V8.6" stroke="#9a9a9a" stroke-width="0.7"/><path d="M5.6 5.6 V9.6 L8.8 7.6Z" fill="#eeeeee"/></svg>
<svg class="r" style="left:1.10px;top:88.90px;" width="11" height="11" viewBox="0 0 11 11"><circle cx="4.2" cy="4.2" r="2.6" fill="none" stroke="#eeeeee" stroke-width="1.1"/><rect x="4.4" y="4.6" width="4.6" height="4.2" rx="0.8" fill="#343434" stroke="#eeeeee" stroke-width="1.1"/></svg>
<div class="r" style="left:1.30px;top:104.30px;width:10.90px;height:15.80px;background:#1c4a80;border-radius:2.5px;"></div>
<svg class="r" style="left:1.10px;top:107.00px;" width="11" height="11" viewBox="0 0 11 11"><rect x="2.5" y="2.5" width="6" height="6" fill="#f0148a" stroke="#ffffff" stroke-width="0.8"/></svg>
<svg class="r" style="left:1.10px;top:123.80px;" width="11" height="11" viewBox="0 0 11 11"><circle cx="5.5" cy="5.5" r="3.3" fill="#d01478" stroke="#ffffff" stroke-width="1"/></svg>
<svg class="r" style="left:1.10px;top:140.50px;" width="11" height="11" viewBox="0 0 11 11"><path d="M4 1.6 L5 3.4 L7 3.6 L5.6 5 L6 7 L4 6 L2.2 7 L2.6 5 L1.2 3.6 L3.2 3.4Z" fill="#f0148a" stroke="#eeeeee" stroke-width="0.7"/><path d="M7.2 4.2 L8 5.8 L9.8 6 L8.6 7.2 L8.9 9 L7.2 8.2 L5.6 9 L5.9 7.2 L4.8 6 L6.5 5.8Z" fill="#343434" stroke="#eeeeee" stroke-width="0.8"/></svg>
<svg class="r" style="left:1.10px;top:157.20px;" width="11" height="11" viewBox="0 0 11 11"><path d="M5.5 1.2 L9.4 3.3 V7.7 L5.5 9.8 L1.6 7.7 V3.3Z" fill="#eeeeee"/><path d="M5.9 5.9 L8.2 4.6 V6.9 L5.9 8.2Z M5.1 5.9 L2.8 4.6 V6.9 L5.1 8.2Z" fill="#f0148a"/><path d="M5.5 2.2 L8.2 3.7 L5.5 5.2 L2.8 3.7Z" fill="#ffffff"/></svg>
<svg class="r" style="left:1.10px;top:173.80px;" width="11" height="11" viewBox="0 0 11 11"><path d="M5.6 5.6 A1 1 0 1 1 6.6 4.8 A2.2 2.2 0 1 1 3.4 5.8 A3.4 3.4 0 1 1 8.8 7.6" fill="none" stroke="#eeeeee" stroke-width="1.05"/></svg>
<svg class="r" style="left:1.10px;top:192.20px;" width="11" height="11" viewBox="0 0 11 11"><path d="M2.2 1.6 C2.6 4 2.6 6 1.8 8.6" fill="none" stroke="#18a030" stroke-width="1"/><circle cx="2.2" cy="1.8" r="0.9" fill="#18a030"/><path d="M6.6 3 L9.2 5.2 L7 8.8 L4.2 8.8 L4 6.2 Z" fill="none" stroke="#eeeeee" stroke-width="1"/><circle cx="6.6" cy="6.2" r="0.8" fill="#eeeeee"/></svg>
<svg class="r" style="left:1.10px;top:208.40px;" width="11" height="11" viewBox="0 0 11 11"><path d="M1.6 2.2 L3.6 4 L2 5.6 M2.6 9.2 L4.4 7.4" fill="none" stroke="#18a030" stroke-width="1.1"/><path d="M4.4 7.4 L8.6 3.2 L9.6 2.2 L8.4 1.4 L3.8 6.2Z" fill="#eeeeee"/></svg>
<svg class="r" style="left:1.10px;top:224.80px;" width="11" height="11" viewBox="0 0 11 11"><path d="M1.6 3.4 L3.4 5.2 M2 9.4 L4.2 7.2" fill="none" stroke="#18a030" stroke-width="1.1"/><path d="M3.6 7.6 L9.4 1.6 L9.8 2.2 L4.6 8.2Z" fill="#eeeeee" stroke="#eeeeee" stroke-width="0.5"/></svg>
<div class="t" style="left:1.90px;top:241.00px;font-size:10.00px;line-height:14px;color:#eeeeee;font-weight:bold;">A</div>
<div class="r" style="left:10.00px;top:242.80px;width:1.00px;height:9.40px;background:#18a030;"></div>
<div class="r" style="left:2.6px;top:261.6px;width:7.4px;height:7.4px;border:0.7px solid #cfd6de;background:linear-gradient(160deg,#1b8fe6,#39b4f4 55%,#8fd6f8);"></div>
<svg class="r" style="left:1.10px;top:277.10px;" width="11" height="11" viewBox="0 0 11 11"><rect x="1.4" y="1.4" width="8.2" height="8.2" fill="#1a6fb4" stroke="#cfd6de" stroke-width="0.8"/><path d="M5.5 1.6 V5.5 H1.6 M5.5 9.4 V5.5 H9.4 M3.2 3.2 H5.5 M5.5 7.8 H7.8 M3.2 5.5 V7.8 M7.8 5.5 V3.2" stroke="#e8f0f8" stroke-width="1" fill="none"/></svg>
<svg class="r" style="left:1.10px;top:294.10px;" width="11" height="11" viewBox="0 0 11 11"><circle cx="2.6" cy="2.4" r="1.1" fill="#1fa0f0"/><path d="M2.4 9.4 L3 7.2 L7.2 3 L8.6 4.4 L4.4 8.6Z" fill="#eeeeee"/><path d="M6.6 2 L9.6 5 M7.4 2.6 L8.8 1.4 L10 2.6 L8.8 3.8" stroke="#eeeeee" stroke-width="1.1" fill="#eeeeee"/></svg>
<svg class="r" style="left:1.10px;top:310.30px;" width="11" height="11" viewBox="0 0 11 11"><path d="M6.2 1.4 L10 5.2 L6.4 8.8 L2.6 5Z" fill="#eeeeee"/><rect x="5.2" y="4" width="2.2" height="2.2" fill="#343434" transform="rotate(45 6.3 5.1)"/><circle cx="2.4" cy="8.4" r="1.3" fill="#1fa0f0"/></svg>
<svg class="r" style="left:1.10px;top:328.90px;" width="11" height="11" viewBox="0 0 11 11"><path d="M1.4 9 V6.6 C2.6 6.4 3 5.6 3.6 4.4 C4.4 2.6 6.4 1.6 8.6 3 C7 3.2 6.4 4 6.6 5.4 C7.8 5.6 9 6 9.8 6.8 V9Z" fill="#eeeeee"/><rect x="1.4" y="7.4" width="8.4" height="0.8" fill="#343434"/></svg>
<svg class="r" style="left:1.10px;top:345.30px;" width="11" height="11" viewBox="0 0 11 11"><rect x="3.6" y="5" width="5.2" height="4.6" rx="0.6" fill="#eeeeee"/><rect x="5" y="2.4" width="2.4" height="2.2" fill="#eeeeee"/><path d="M1.4 1.6 h0.9 M2.8 3 h0.9 M1.2 4.2 h0.9 M2.6 0.8 h0.9" stroke="#bbbbbb" stroke-width="0.8"/><rect x="4.6" y="6.4" width="3.2" height="1.6" fill="#343434"/></svg>
<svg class="r" style="left:1.10px;top:362.00px;" width="11" height="11" viewBox="0 0 11 11"><path d="M4 6.6 L7 2 L9.6 3.8 L6.8 8Z" fill="#eeeeee"/><path d="M1.4 9.4 H4.2 M5.4 9.4 H9.8" stroke="#eeeeee" stroke-width="0.9"/><path d="M2.4 7 L3.4 6 M2.2 4.8 L2.8 4.4" stroke="#aaaaaa" stroke-width="0.7"/></svg>
<svg class="r" style="left:1.10px;top:378.40px;" width="11" height="11" viewBox="0 0 11 11"><path d="M1.4 2.6 C4.4 2 4 6 7.6 7.4" fill="none" stroke="#eeeeee" stroke-width="1.3"/><path d="M9.6 8.6 L5.8 8.8 L8 5.2Z" fill="#eeeeee"/></svg>
<svg class="r" style="left:1.10px;top:395.30px;" width="11" height="11" viewBox="0 0 11 11"><path d="M2.2 9.6 L5.5 1.6 L8.8 9.6 M3.6 6.4 H7.4" fill="none" stroke="#eeeeee" stroke-width="1.2" stroke-linejoin="round"/></svg>
<svg class="r" style="left:1.10px;top:413.30px;" width="11" height="11" viewBox="0 0 11 11"><rect x="2.6" y="1.6" width="5.8" height="7.8" rx="0.8" fill="none" stroke="#eeeeee" stroke-width="1.2"/><path d="M7 3.4 V7.6" stroke="#eeeeee" stroke-width="0.9"/></svg>
<svg class="r" style="left:1.10px;top:430.70px;" width="11" height="11" viewBox="0 0 11 11"><circle cx="4.8" cy="4.6" r="2.8" fill="none" stroke="#eeeeee" stroke-width="1.2"/><path d="M6.8 6.8 L9.6 9.6" stroke="#eeeeee" stroke-width="1.5"/></svg>
<svg class="r" style="left:1.10px;top:447.10px;" width="11" height="11" viewBox="0 0 11 11"><rect x="3.6" y="1.4" width="6" height="6.6" rx="1.6" fill="none" stroke="#eeeeee" stroke-width="1.1"/><rect x="1.4" y="3.4" width="5.6" height="6.4" rx="1" fill="#343434" stroke="#eeeeee" stroke-width="1.1"/><path d="M3 5.4 H4.6 M3 7.6 H4.6" stroke="#eeeeee" stroke-width="0.7"/></svg>
<div class="r" style="left:746.60px;top:55.30px;width:227.00px;height:432.50px;background:#2e2e2e;"></div>
<div class="r" style="left:746.60px;top:55.30px;width:3.60px;height:432.50px;background:#2b2b2b;"></div>
<div class="r" style="left:742.20px;top:55.30px;width:4.40px;height:432.50px;background:#393939;"></div>
<div class="r" style="left:750.20px;top:55.30px;width:223.40px;height:19.50px;background:#2a2a2a;"></div>
<div class="r" style="left:750.20px;top:55.30px;width:82.00px;height:19.50px;background:#303030;"></div>
<div class="r" style="left:958.00px;top:55.30px;width:15.60px;height:19.50px;background:#323232;"></div>
<div class="r" style="left:750.20px;top:72.40px;width:82.00px;height:2.40px;background:#1a62bd;"></div>
<svg class="r" style="left:755.50px;top:59.50px;" width="10" height="10" viewBox="0 0 10 10"><path d="M1.2 1.4 H7.2 M1.2 1.4 V7.6 H4" fill="none" stroke="#e0e0e0" stroke-width="0.9"/><path d="M2.2 9 L3 6.8 L8.6 1.2 L9.6 2.2 L4 7.8Z" fill="#e8e8e8"/><path d="M1.6 9.4 L2.8 8.2" stroke="#1fa0f0" stroke-width="1"/></svg>
<div class="t" style="left:767.20px;top:58.60px;font-size:9.20px;line-height:13px;color:#e4e4e4;transform-origin:0 50%;transform:scaleX(0.8248);">Fill and Stroke</div>
<svg class="r" style="left:819.40px;top:62.60px;" width="5" height="5" viewBox="0 0 5 5"><path d="M0.6 0.6 L4.4 4.4 M4.4 0.6 L0.6 4.4" stroke="#d8d8d8" stroke-width="0.8"/></svg>
<svg class="r" style="left:843.60px;top:60.40px;" width="8.6" height="8.6" viewBox="0 0 8.6 8.6"><rect x="0.6" y="0.8" width="7.4" height="7" fill="#0a300a" stroke="#16a01c" stroke-width="0.9"/><path d="M2 6.4 L3.6 3.6 L4.8 5 L6.6 2.4 M2.2 2.6 h1.2" stroke="#16a01c" stroke-width="0.9" fill="none"/></svg>
<div class="t" style="left:877.80px;top:58.20px;font-size:9.40px;line-height:13px;color:#f4f4f4;font-weight:bold;text-shadow:0.3px 0 0 #f4f4f4;">T</div>
<svg class="r" style="left:910.50px;top:60.40px;" width="9" height="9" viewBox="0 0 9 9"><rect x="0.8" y="0.6" width="5.6" height="1.8" rx="0.9" fill="#1fa0f0"/><rect x="2" y="3.4" width="6" height="1.8" rx="0.9" fill="#7cc8f4"/><rect x="2.4" y="6.4" width="5.6" height="1.8" rx="0.9" fill="#f4f4f4"/></svg>
<svg class="r" style="left:962.00px;top:62.00px;" width="8" height="5.4" viewBox="0 0 8 5.4"><path d="M0.8 0.8 L4 4.2 L7.2 0.8" fill="none" stroke="#c8c8c8" stroke-width="1"/></svg>
<div class="r" style="left:750.20px;top:88.00px;width:27.80px;height:2.10px;background:#1a62bd;"></div>
<div class="r" style="left:754.80px;top:79.20px;width:6.80px;height:6.80px;background:#eeeeee;border-radius:0.8px;"></div>
<div class="t" style="left:764.80px;top:77.10px;font-size:9.20px;line-height:13px;color:#e4e4e4;transform-origin:0 50%;transform:scaleX(0.8339);">Fill</div>
<svg class="r" style="left:786.20px;top:79.00px;" width="7.4" height="7.4" viewBox="0 0 7.4 7.4"><rect x="0.9" y="0.9" width="5.6" height="5.6" rx="0.6" fill="none" stroke="#e0e0e0" stroke-width="1.1"/></svg>
<div class="t" style="left:796.20px;top:77.10px;font-size:9.20px;line-height:13px;color:#e0e0e0;transform-origin:0 50%;transform:scaleX(0.8392);">Stroke paint</div>
<svg class="r" style="left:849.00px;top:79.00px;" width="8" height="8" viewBox="0 0 8 8"><path d="M0.6 2 H5 M0.6 6.6 H7.4" stroke="#1fa0f0" stroke-width="1.1"/><path d="M1 4.4 h1.4 M3.4 4.4 h1.4 M5.8 4.4 h1.4" stroke="#e0e0e0" stroke-width="1"/><path d="M5 0.6 L7.4 2 L5 3.4Z" fill="#1fa0f0"/></svg>
<div class="t" style="left:859.60px;top:77.10px;font-size:9.20px;line-height:13px;color:#e0e0e0;transform-origin:0 50%;transform:scaleX(0.8073);">Stroke style</div>
<div class="r" style="left:750.20px;top:92.80px;width:12.20px;height:12.40px;background:#353535;border:0.7px solid #505050;box-sizing:border-box;border-radius:1.5px;"></div>
<svg class="r" style="left:753.80px;top:96.50px;" width="5" height="5" viewBox="0 0 5 5"><path d="M0.7 0.7 L4.3 4.3 M4.3 0.7 L0.7 4.3" stroke="#f0f0f0" stroke-width="0.95"/></svg>
<div class="r" style="left:764.20px;top:92.40px;width:12.80px;height:13.20px;background:#1c4a80;border-radius:2px;"></div>
<div class="r" style="left:766.00px;top:94.70px;width:9.30px;height:8.50px;background:#189cf0;"></div>
<div class="r" style="left:781px;top:94.7px;width:8.6px;height:8.5px;background:linear-gradient(90deg,#189cf0,#dff0fc);"></div>
<div class="r" style="left:795.3px;top:94.7px;width:8.7px;height:8.5px;background:radial-gradient(circle at 50% 50%,#189cf0 18%,#f4f8fc 85%);"></div>
<div class="r" style="left:810px;top:94.7px;width:9px;height:8.5px;background:linear-gradient(135deg,#189cf0 12%,#f4f8fc 48%,#f4f8fc 58%,#189cf0 95%);"></div>
<svg class="r" style="left:824.90px;top:94.60px;" width="8.8" height="8.8" viewBox="0 0 8.8 8.8"><rect x="0.2" y="0.2" width="2" height="2" fill="#f2f2f2"/><rect x="0.2" y="3.4" width="2" height="2" fill="#f2f2f2"/><rect x="0.2" y="6.6" width="2" height="2" fill="#f2f2f2"/><rect x="3.4" y="0.2" width="2" height="2" fill="#f2f2f2"/><rect x="3.4" y="3.4" width="2" height="2" fill="#f2f2f2"/><rect x="3.4" y="6.6" width="2" height="2" fill="#f2f2f2"/><rect x="6.6" y="0.2" width="2" height="2" fill="#f2f2f2"/><rect x="6.6" y="3.4" width="2" height="2" fill="#f2f2f2"/><rect x="6.6" y="6.6" width="2" height="2" fill="#f2f2f2"/><rect x="2.3" y="2.3" width="1" height="1" fill="#f2f2f2"/><rect x="2.3" y="5.5" width="1" height="1" fill="#f2f2f2"/><rect x="5.5" y="2.3" width="1" height="1" fill="#f2f2f2"/><rect x="5.5" y="5.5" width="1" height="1" fill="#f2f2f2"/></svg>
<div class="r" style="left:839.00px;top:94.60px;width:9.00px;height:8.60px;background:#8c8c8c;"></div>
<div class="r" style="left:840.70px;top:96.20px;width:5.60px;height:5.40px;background:#189cf0;"></div>
<div class="t" style="left:855.80px;top:91.95px;font-size:10.50px;line-height:14px;color:#f4f4f4;font-weight:bold;">?</div>
<svg class="r" style="left:944.50px;top:94.20px;" width="9.4" height="9.6" viewBox="0 0 9.4 9.6"><path d="M0.8 0.8 L3 1.8 H6.4 L8.6 0.8 V5 A3.9 3.9 0 0 1 0.8 5Z" fill="#f0f0f0"/><circle cx="4.7" cy="5" r="1.9" fill="#2e2e2e"/></svg>
<div class="r" style="left:956.80px;top:92.30px;width:13.40px;height:12.40px;background:#1c4a80;border-radius:2px;"></div>
<svg class="r" style="left:958.90px;top:94.20px;" width="9.4" height="9.6" viewBox="0 0 9.4 9.6"><path d="M0.8 0.8 L3 1.8 H6.4 L8.6 0.8 V5 A3.9 3.9 0 0 1 0.8 5Z" fill="#f4f0ea"/></svg>
<div class="t" style="left:751.50px;top:114.90px;font-size:9.20px;line-height:13px;color:#e8e8e8;font-weight:bold;transform-origin:0 50%;transform:scaleX(0.7801);">Flat color</div>
<div class="r" style="left:916.20px;top:112.00px;width:53.20px;height:16.00px;background:#383838;border-radius:2.5px;box-shadow:0 0.6px 1.2px rgba(0,0,0,0.55);"></div>
<div class="r" style="left:921.4px;top:117px;width:8.6px;height:6.3px;background:linear-gradient(90deg,#ff3020,#ffd000 18%,#30e030 36%,#20d0e0 54%,#3040ff 70%,#e020e0 86%,#ff2060);"></div>
<div class="t" style="left:934.00px;top:113.70px;font-size:9.20px;line-height:13px;color:#dcdcdc;transform-origin:0 50%;transform:scaleX(0.7487);">HSL</div>
<svg class="r" style="left:957.40px;top:118.20px;" width="6.4" height="4.4" viewBox="0 0 6.4 4.4"><path d="M0.3 0.5 H6.1 L3.2 4Z" fill="#f0f0f0"/></svg>
<svg class="r" style="left:753.30px;top:136.20px;" width="6" height="4.2" viewBox="0 0 6 4.2"><path d="M0.3 0.4 H5.7 L3 3.9Z" fill="#f0f0f0"/></svg>
<div class="r" style="left:762.3px;top:133.8px;width:8.6px;height:8.6px;border-radius:50%;background:conic-gradient(from 90deg,#f00,#f0f,#00f,#0ff,#0f0,#ff0,#f00);-webkit-mask:radial-gradient(circle,transparent 1.5px,#000 1.9px);mask:radial-gradient(circle,transparent 1.5px,#000 1.9px);"></div>
<div class="t" style="left:774.00px;top:131.60px;font-size:9.20px;line-height:13px;color:#e0e0e0;transform-origin:0 50%;transform:scaleX(0.8416);">Color Wheel</div>
<div class="r" style="left:775.40px;top:156.80px;width:170.00px;height:170.00px;border-radius:50%;background:conic-gradient(from 90deg,#f00,#f0f,#00f,#0ff,#0f0,#ff0,#f00);-webkit-mask:radial-gradient(circle,transparent 66.80px,#000 67.60px);mask:radial-gradient(circle,transparent 66.80px,#000 67.60px);"></div>
<svg class="r" style="left:775.40px;top:156.80px;" width="170" height="170" viewBox="0 0 170 170"><defs><linearGradient id="ghue" gradientUnits="userSpaceOnUse" x1="51.40" y1="143.20" x2="101.80" y2="55.90"><stop offset="0" stop-color="#0000ff" stop-opacity="1"/><stop offset="1" stop-color="#0000ff" stop-opacity="0"/></linearGradient><linearGradient id="gwht" gradientUnits="userSpaceOnUse" x1="51.40" y1="26.80" x2="101.80" y2="114.10"><stop offset="0" stop-color="#fff" stop-opacity="1"/><stop offset="1" stop-color="#fff" stop-opacity="0"/></linearGradient></defs><g style="isolation:isolate"><polygon points="51.40,143.20 51.40,26.80 152.20,85.00" fill="#000"/><polygon points="51.40,143.20 51.40,26.80 152.20,85.00" fill="url(#ghue)"/><polygon points="51.40,143.20 51.40,26.80 152.20,85.00" fill="url(#gwht)" style="mix-blend-mode:plus-lighter"/></g><path d="M51.40 143.20 L42.50 158.61" stroke="#ffffff" stroke-width="1.3"/><circle cx="101.90" cy="115.10" r="2" fill="none" stroke="#101030" stroke-width="2"/><circle cx="101.90" cy="115.10" r="2" fill="none" stroke="#ffffff" stroke-width="1"/></svg>
<div class="t" style="left:752.00px;top:336.70px;font-size:9.20px;line-height:13px;color:#e0e0e0;transform-origin:0 50%;transform:scaleX(0.7826);">H:</div>
<div class="r" style="left:761.10px;top:334.00px;width:167.70px;height:17.80px;background:linear-gradient(90deg,#f00,#ff0 16.67%,#0f0 33.33%,#0ff 50%,#00f 66.67%,#f0f 83.33%,#f00);"></div>
<svg class="r" style="left:870.70px;top:333.70px;" width="4.4" height="2.6" viewBox="0 0 4.4 2.6"><path d="M0 0 H4.4 L2.2 2.6Z" fill="#fff" stroke="#222" stroke-width="0.3"/></svg>
<svg class="r" style="left:870.70px;top:349.50px;" width="4.4" height="2.6" viewBox="0 0 4.4 2.6"><path d="M0 2.6 H4.4 L2.2 0Z" fill="#fff" stroke="#222" stroke-width="0.3"/></svg>
<div class="r" style="left:931.30px;top:334.60px;width:36.80px;height:16.80px;background:#343434;border-radius:2.5px;"></div>
<div class="t" style="left:934.90px;top:336.70px;font-size:9.20px;line-height:13px;color:#e0e0e0;transform-origin:0 50%;transform:scaleX(0.8013);">240</div>
<div class="r" style="left:952.20px;top:342.50px;width:6.40px;height:1.20px;background:#ececec;"></div>
<div class="r" style="left:961.00px;top:342.50px;width:6.20px;height:1.20px;background:#ffffff;"></div>
<div class="r" style="left:963.50px;top:340.00px;width:1.20px;height:6.20px;background:#ffffff;"></div>
<div class="t" style="left:752.00px;top:356.50px;font-size:9.20px;line-height:13px;color:#e0e0e0;transform-origin:0 50%;transform:scaleX(0.7363);">S:</div>
<div class="r" style="left:761.10px;top:353.70px;width:167.70px;height:18.00px;background:linear-gradient(90deg,#404040,#000080);"></div>
<svg class="r" style="left:926.60px;top:353.40px;" width="4.4" height="2.6" viewBox="0 0 4.4 2.6"><path d="M0 0 H4.4 L2.2 2.6Z" fill="#fff" stroke="#222" stroke-width="0.3"/></svg>
<svg class="r" style="left:926.60px;top:369.40px;" width="4.4" height="2.6" viewBox="0 0 4.4 2.6"><path d="M0 2.6 H4.4 L2.2 0Z" fill="#fff" stroke="#222" stroke-width="0.3"/></svg>
<div class="r" style="left:931.30px;top:354.30px;width:36.80px;height:17.00px;background:#343434;border-radius:2.5px;"></div>
<div class="t" style="left:934.90px;top:356.50px;font-size:9.20px;line-height:13px;color:#e0e0e0;transform-origin:0 50%;transform:scaleX(0.8013);">100</div>
<div class="r" style="left:952.20px;top:362.30px;width:6.40px;height:1.20px;background:#ececec;"></div>
<div class="r" style="left:961.00px;top:362.30px;width:6.20px;height:1.20px;background:#585858;"></div>
<div class="r" style="left:963.50px;top:359.80px;width:1.20px;height:6.20px;background:#585858;"></div>
<div class="t" style="left:752.00px;top:376.35px;font-size:9.20px;line-height:13px;color:#e0e0e0;transform-origin:0 50%;transform:scaleX(0.7299);">L:</div>
<div class="r" style="left:761.10px;top:373.60px;width:167.70px;height:17.90px;background:linear-gradient(90deg,#000,#00f 50%,#fff);"></div>
<svg class="r" style="left:800.82px;top:373.30px;" width="4.4" height="2.6" viewBox="0 0 4.4 2.6"><path d="M0 0 H4.4 L2.2 2.6Z" fill="#fff" stroke="#222" stroke-width="0.3"/></svg>
<svg class="r" style="left:800.82px;top:389.20px;" width="4.4" height="2.6" viewBox="0 0 4.4 2.6"><path d="M0 2.6 H4.4 L2.2 0Z" fill="#fff" stroke="#222" stroke-width="0.3"/></svg>
<div class="r" style="left:931.30px;top:374.20px;width:36.80px;height:16.90px;background:#343434;border-radius:2.5px;"></div>
<div class="t" style="left:934.90px;top:376.35px;font-size:9.20px;line-height:13px;color:#e0e0e0;transform-origin:0 50%;transform:scaleX(0.8013);">25</div>
<div class="r" style="left:952.20px;top:382.15px;width:6.40px;height:1.20px;background:#ececec;"></div>
<div class="r" style="left:961.00px;top:382.15px;width:6.20px;height:1.20px;background:#ffffff;"></div>
<div class="r" style="left:963.50px;top:379.65px;width:1.20px;height:6.20px;background:#ffffff;"></div>
<div class="t" style="left:752.00px;top:395.90px;font-size:9.20px;line-height:13px;color:#e0e0e0;transform-origin:0 50%;transform:scaleX(0.8053);">A:</div>
<div class="r" style="left:761.10px;top:393.20px;width:167.70px;height:17.80px;background:linear-gradient(90deg,rgba(0,0,128,0),rgba(0,0,128,1)),repeating-conic-gradient(#6c6c6c 0% 25%,#a8a8a8 0% 50%) 0 0/8.4px 8.4px;"></div>
<svg class="r" style="left:926.60px;top:392.90px;" width="4.4" height="2.6" viewBox="0 0 4.4 2.6"><path d="M0 0 H4.4 L2.2 2.6Z" fill="#fff" stroke="#222" stroke-width="0.3"/></svg>
<svg class="r" style="left:926.60px;top:408.70px;" width="4.4" height="2.6" viewBox="0 0 4.4 2.6"><path d="M0 2.6 H4.4 L2.2 0Z" fill="#fff" stroke="#222" stroke-width="0.3"/></svg>
<div class="r" style="left:931.30px;top:393.80px;width:36.80px;height:16.80px;background:#343434;border-radius:2.5px;"></div>
<div class="t" style="left:934.90px;top:395.90px;font-size:9.20px;line-height:13px;color:#e0e0e0;transform-origin:0 50%;transform:scaleX(0.8013);">100</div>
<div class="r" style="left:952.20px;top:401.70px;width:6.40px;height:1.20px;background:#ececec;"></div>
<div class="r" style="left:961.00px;top:401.70px;width:6.20px;height:1.20px;background:#585858;"></div>
<div class="r" style="left:963.50px;top:399.20px;width:1.20px;height:6.20px;background:#585858;"></div>
<svg class="r" style="left:748.80px;top:417.20px;" width="10.4" height="10.4" viewBox="0 0 10.4 10.4"><circle cx="5.2" cy="3.4" r="2.2" fill="none" stroke="#5c5c5c" stroke-width="0.9"/><circle cx="3.3" cy="6.8" r="2.2" fill="none" stroke="#5c5c5c" stroke-width="0.9"/><circle cx="7.1" cy="6.8" r="2.2" fill="none" stroke="#5c5c5c" stroke-width="0.9"/><circle cx="3.6" cy="6.9" r="0.9" fill="#2a7a4a"/><circle cx="6.9" cy="6.9" r="0.9" fill="#a02a4a"/></svg>
<svg class="r" style="left:760.00px;top:417.90px;" width="9" height="9" viewBox="0 0 9 9"><circle cx="4.5" cy="4.5" r="3.7" fill="none" stroke="#4c4c4c" stroke-width="0.8"/><circle cx="4.5" cy="4.5" r="1.3" fill="none" stroke="#4c4c4c" stroke-width="0.7"/></svg>
<svg class="r" style="left:775.60px;top:417.30px;" width="10" height="10" viewBox="0 0 10 10"><path d="M1.6 9 L2.2 7.2 L6.4 3 L7.6 4.2 L3.4 8.4Z" fill="#e4e4e4"/><path d="M5.8 2.2 L8.4 4.8 M6.8 3.2 L8.2 1.8 L8.8 2.4" stroke="#e4e4e4" stroke-width="1.2" fill="none"/><path d="M1.8 0.8 C2.6 1.8 2.8 2.4 2.8 2.9 A1 1 0 0 1 0.8 2.9 C0.8 2.4 1 1.8 1.8 0.8Z" fill="#1fa8f0"/></svg>
<div class="t" style="left:903.70px;top:415.90px;font-size:9.20px;line-height:13px;color:#d8d8d8;transform-origin:0 50%;transform:scaleX(0.7510);">RGBA:</div>
<div class="r" style="left:927.90px;top:415.20px;width:40.20px;height:15.20px;background:#313131;border-radius:2.5px;border:0.6px solid #383838;box-sizing:border-box;"></div>
<div class="t" style="left:931.90px;top:416.10px;font-size:9.20px;line-height:13px;color:#e0e0e0;transform-origin:0 50%;transform:scaleX(0.8472);">000080ff</div>
<div class="r" style="left:750.20px;top:432.60px;width:223.40px;height:0.90px;background:#292929;"></div>
<div class="t" style="left:861.40px;top:438.50px;font-size:9.20px;line-height:13px;color:#e0e0e0;transform-origin:0 50%;transform:scaleX(0.8382);">Blend mode:</div>
<div class="r" style="left:907.70px;top:436.40px;width:63.60px;height:16.80px;background:#373737;border-radius:2.5px;box-shadow:0 0.6px 1.2px rgba(0,0,0,0.55);"></div>
<div class="t" style="left:913.10px;top:438.50px;font-size:9.20px;line-height:13px;color:#dcdcdc;transform-origin:0 50%;transform:scaleX(0.8769);">Normal</div>
<svg class="r" style="left:959.70px;top:442.80px;" width="6.4" height="4.4" viewBox="0 0 6.4 4.4"><path d="M0.3 0.5 H6.1 L3.2 4Z" fill="#f0f0f0"/></svg>
<div class="r" style="left:748.50px;top:455.70px;width:181.60px;height:12.40px;background:#272727;border-left:0.8px solid #12284a;box-sizing:border-box;"></div>
<div class="t" style="left:751.10px;top:455.70px;font-size:9.20px;line-height:13px;color:#e0e0e0;transform-origin:0 50%;transform:scaleX(0.8126);">Blur (%)</div>
<div class="r" style="left:931.90px;top:455.20px;width:39.40px;height:13.40px;background:#333333;border-radius:2.5px;"></div>
<div class="t" style="left:935.00px;top:455.70px;font-size:9.20px;line-height:13px;color:#e0e0e0;transform-origin:0 50%;transform:scaleX(0.7819);">0.0</div>
<div class="r" style="left:954.70px;top:461.60px;width:6.40px;height:1.20px;background:#525252;"></div>
<div class="r" style="left:963.50px;top:461.60px;width:6.20px;height:1.20px;background:#ffffff;"></div>
<div class="r" style="left:966.00px;top:459.10px;width:1.20px;height:6.20px;background:#ffffff;"></div>
<div class="r" style="left:748.50px;top:471.60px;width:181.60px;height:12.60px;background:#1b5fb6;"></div>
<div class="t" style="left:751.10px;top:471.80px;font-size:9.20px;line-height:13px;color:#eaf2ff;transform-origin:0 50%;transform:scaleX(0.8324);">Opacity (%)</div>
<div class="r" style="left:931.90px;top:471.20px;width:39.40px;height:13.40px;background:#333333;border-radius:2.5px;"></div>
<div class="t" style="left:935.60px;top:471.80px;font-size:9.20px;line-height:13px;color:#e8e8e8;transform-origin:0 50%;transform:scaleX(0.7558);">100.0</div>
<div class="r" style="left:954.70px;top:477.60px;width:6.40px;height:1.20px;background:#ececec;"></div>
<div class="r" style="left:963.50px;top:477.60px;width:6.20px;height:1.20px;background:#585858;"></div>
<div class="r" style="left:966.00px;top:475.10px;width:1.20px;height:6.20px;background:#585858;"></div>
<div class="r" style="left:734.80px;top:109.40px;width:43.20px;height:23.20px;background:rgba(12,12,12,0.96);border-radius:2.5px;"></div>
<div class="t" style="left:741.10px;top:115.60px;font-size:9.20px;line-height:13px;color:#cacaca;transform-origin:0 50%;transform:scaleX(0.8755);">No paint</div>
<div class="r" style="left:973.60px;top:53.00px;width:26.40px;height:437.00px;background:#353535;"></div>
<svg class="r" style="left:983.20px;top:60.00px;" width="9.6" height="9.6" viewBox="0 0 11 11"><path d="M2 1.4 H6.2 L8.4 3.6 V9.6 H2Z" fill="none" stroke="#ececec" stroke-width="1.2"/><circle cx="8.8" cy="1.8" r="1.1" fill="#18b030"/></svg>
<svg class="r" style="left:983.20px;top:78.00px;" width="9.6" height="9.6" viewBox="0 0 11 11"><path d="M1.4 9 V2 H4.4 L5.4 3.2 H9.4 V9Z" fill="#ececec"/><rect x="2.6" y="5.2" width="6.8" height="0.9" fill="#353535"/></svg>
<svg class="r" style="left:983.20px;top:97.80px;" width="9.6" height="9.6" viewBox="0 0 11 11"><path d="M1.6 6.4 H9.4 V9.6 H1.6Z" fill="#ececec"/><path d="M5.5 1.2 V5.4 M3.4 3.6 L5.5 5.8 L7.6 3.6" stroke="#18b030" stroke-width="1.3" fill="none"/><rect x="2.8" y="7.6" width="5.4" height="0.8" fill="#353535"/></svg>
<svg class="r" style="left:983.20px;top:116.40px;" width="9.6" height="9.6" viewBox="0 0 11 11"><rect x="3" y="1.6" width="5" height="2.4" fill="#ececec"/><rect x="1.4" y="4.2" width="8.2" height="3.6" rx="0.6" fill="#ececec"/><rect x="3" y="6.6" width="5" height="3" fill="#ececec" stroke="#353535" stroke-width="0.6"/></svg>
<svg class="r" style="left:983.20px;top:137.60px;" width="9.6" height="9.6" viewBox="0 0 11 11"><path d="M3.4 3 H8.2 V9.6 H3.4Z" fill="none" stroke="#ececec" stroke-width="1.2"/><path d="M6.4 1 L3.8 2.4 L6.4 3.8" fill="none" stroke="#ececec" stroke-width="1"/><path d="M3.4 6.4 H6.2 M5 5.2 L6.4 6.4 L5 7.6" stroke="#18b030" stroke-width="0.9" fill="none"/></svg>
<svg class="r" style="left:983.20px;top:157.20px;" width="9.6" height="9.6" viewBox="0 0 11 11"><path d="M2.2 1.4 H6.2 L8 3.2 V9.6 H2.2Z" fill="none" stroke="#ececec" stroke-width="1.2"/><path d="M5.8 6.4 H10 M8.6 5.2 L10 6.4 L8.6 7.6" stroke="#18b030" stroke-width="1" fill="none"/></svg>
<svg class="r" style="left:983.20px;top:178.60px;" width="9.6" height="9.6" viewBox="0 0 11 11"><path d="M3 4.2 H7 A2.2 2.2 0 0 1 7 8.6 H5.4" fill="none" stroke="#ececec" stroke-width="1.2"/><path d="M4.6 2 L2.2 4.2 L4.6 6.4" fill="none" stroke="#ececec" stroke-width="1.2"/></svg>
<svg class="r" style="left:983.20px;top:198.20px;" width="9.6" height="9.6" viewBox="0 0 11 11"><path d="M8 4.2 H4 A2.2 2.2 0 0 0 4 8.6 H5.6" fill="none" stroke="#5a5a5a" stroke-width="1.2"/><path d="M6.4 2 L8.8 4.2 L6.4 6.4" fill="none" stroke="#5a5a5a" stroke-width="1.2"/></svg>
<svg class="r" style="left:983.20px;top:219.20px;" width="9.6" height="9.6" viewBox="0 0 11 11"><rect x="1.6" y="1.6" width="5.6" height="5.6" fill="#ececec"/><rect x="4" y="4" width="5.6" height="5.6" fill="#ececec" stroke="#353535" stroke-width="0.7"/></svg>
<svg class="r" style="left:983.20px;top:238.60px;" width="9.6" height="9.6" viewBox="0 0 11 11"><path d="M2.6 1.4 L7.6 7.4 M8.4 1.4 L3.4 7.4" stroke="#ececec" stroke-width="1.1"/><circle cx="3" cy="8.4" r="1.3" fill="none" stroke="#ececec" stroke-width="1"/><circle cx="8" cy="8.4" r="1.3" fill="none" stroke="#ececec" stroke-width="1"/></svg>
<svg class="r" style="left:983.20px;top:258.40px;" width="9.6" height="9.6" viewBox="0 0 11 11"><rect x="2" y="2" width="7" height="8" rx="1" fill="#ececec"/><rect x="4" y="1" width="3" height="1.8" fill="#ececec"/><rect x="3.6" y="4" width="3.8" height="4.4" fill="#8a8a8a"/></svg>
<div class="r" style="left:978.00px;top:277.00px;width:19.50px;height:14.50px;background:#2c2c2c;border-radius:2.5px;"></div>
<svg class="r" style="left:984.60px;top:281.80px;" width="6.4" height="4.4" viewBox="0 0 6.4 4.4"><path d="M0.3 0.5 H6.1 L3.2 4Z" fill="#f0f0f0"/></svg>
<div class="r" style="left:0.00px;top:490.00px;width:1000.00px;height:20.00px;background:#353535;"></div>
<div class="r" style="left:1.20px;top:491.25px;width:16.40px;height:17.55px;background:#ffffff;"></div>
<svg class="r" style="left:1.20px;top:491.25px;" width="16.4" height="17.55" viewBox="0 0 16.4 17.55"><path d="M1.2 1.2 L15.2 16.4 M15.2 1.2 L1.2 16.4" stroke="#d8183c" stroke-width="1.1"/></svg>
<div class="r" style="left:18.50px;top:491.25px;width:16.90px;height:17.55px;background:#000000;"></div>
<svg class="r" style="left:18.50px;top:491.25px;" width="16.9" height="17.55" viewBox="0 0 16.9 17.55"><circle cx="8.3" cy="8.8" r="5.1" fill="none" stroke="#d8d8d8" stroke-width="1.1"/></svg>
<div class="r" style="left:36.30px;top:491.25px;width:16.70px;height:17.55px;background:#808080;"></div>
<div class="r" style="left:54.00px;top:491.25px;width:17.00px;height:17.55px;background:#ffffff;"></div>
<svg class="r" style="left:71.00px;top:491.00px;" width="896" height="18" viewBox="0 0 896 18"><rect x="0.5" y="0.25" width="894.30" height="17.55" fill="#242424"/><rect x="0.50" y="0.25" width="10.99" height="7.90" fill="#1a1a1a"/><rect x="11.94" y="0.25" width="10.99" height="7.90" fill="#333333"/><rect x="23.38" y="0.25" width="10.99" height="7.90" fill="#4d4d4d"/><rect x="34.82" y="0.25" width="10.99" height="7.90" fill="#666666"/><rect x="46.26" y="0.25" width="10.99" height="7.90" fill="#999999"/><rect x="57.70" y="0.25" width="10.99" height="7.90" fill="#b3b3b3"/><rect x="69.14" y="0.25" width="10.99" height="7.90" fill="#cccccc"/><rect x="80.58" y="0.25" width="10.99" height="7.90" fill="#e6e6e6"/><rect x="92.02" y="0.25" width="10.99" height="7.90" fill="#ececec"/><rect x="103.46" y="0.25" width="10.99" height="7.90" fill="#f2f2f2"/><rect x="114.90" y="0.25" width="10.99" height="7.90" fill="#f9f9f9"/><rect x="126.34" y="0.25" width="10.99" height="7.90" fill="#800000"/><rect x="137.78" y="0.25" width="10.99" height="7.90" fill="#ff0000"/><rect x="149.22" y="0.25" width="10.99" height="7.90" fill="#808000"/><rect x="160.66" y="0.25" width="10.99" height="7.90" fill="#ffff00"/><rect x="172.10" y="0.25" width="10.50" height="7.90" fill="#008000"/><rect x="183.05" y="0.25" width="10.50" height="7.90" fill="#00ff00"/><rect x="194.00" y="0.25" width="10.50" height="7.90" fill="#008080"/><rect x="204.95" y="0.25" width="10.50" height="7.90" fill="#00ffff"/><rect x="215.90" y="0.25" width="10.50" height="7.90" fill="#000080"/><rect x="226.85" y="0.25" width="10.50" height="7.90" fill="#0000ff"/><rect x="237.80" y="0.25" width="10.50" height="7.90" fill="#800080"/><rect x="248.75" y="0.25" width="10.50" height="7.90" fill="#ff00ff"/><rect x="259.70" y="0.25" width="10.50" height="7.90" fill="#2b0000"/><rect x="270.65" y="0.25" width="10.50" height="7.90" fill="#550000"/><rect x="281.60" y="0.25" width="10.50" height="7.90" fill="#800000"/><rect x="292.55" y="0.25" width="10.50" height="7.90" fill="#aa0000"/><rect x="303.50" y="0.25" width="10.50" height="7.90" fill="#d40000"/><rect x="314.45" y="0.25" width="10.50" height="7.90" fill="#ff0000"/><rect x="325.40" y="0.25" width="10.50" height="7.90" fill="#ff2a2a"/><rect x="336.35" y="0.25" width="10.50" height="7.90" fill="#ff5555"/><rect x="347.30" y="0.25" width="10.50" height="7.90" fill="#ff8080"/><rect x="358.25" y="0.25" width="10.50" height="7.90" fill="#ffaaaa"/><rect x="369.20" y="0.25" width="10.50" height="7.90" fill="#ffd5d5"/><rect x="380.15" y="0.25" width="10.50" height="7.90" fill="#280b0b"/><rect x="391.10" y="0.25" width="10.50" height="7.90" fill="#501616"/><rect x="402.05" y="0.25" width="10.50" height="7.90" fill="#782121"/><rect x="413.00" y="0.25" width="10.50" height="7.90" fill="#a02c2c"/><rect x="423.95" y="0.25" width="10.50" height="7.90" fill="#c83737"/><rect x="434.90" y="0.25" width="10.50" height="7.90" fill="#d35f5f"/><rect x="445.85" y="0.25" width="10.50" height="7.90" fill="#de8787"/><rect x="456.80" y="0.25" width="10.50" height="7.90" fill="#e9afaf"/><rect x="467.75" y="0.25" width="10.50" height="7.90" fill="#f4d7d7"/><rect x="478.70" y="0.25" width="10.50" height="7.90" fill="#241c1c"/><rect x="489.65" y="0.25" width="10.50" height="7.90" fill="#483737"/><rect x="500.60" y="0.25" width="10.50" height="7.90" fill="#6c5353"/><rect x="511.55" y="0.25" width="10.50" height="7.90" fill="#916f6f"/><rect x="522.50" y="0.25" width="10.50" height="7.90" fill="#ac9393"/><rect x="533.45" y="0.25" width="10.50" height="7.90" fill="#c8b7b7"/><rect x="544.40" y="0.25" width="10.50" height="7.90" fill="#e3dbdb"/><rect x="555.35" y="0.25" width="10.50" height="7.90" fill="#2b1100"/><rect x="566.30" y="0.25" width="10.50" height="7.90" fill="#552200"/><rect x="577.25" y="0.25" width="10.50" height="7.90" fill="#803300"/><rect x="588.20" y="0.25" width="10.50" height="7.90" fill="#aa4400"/><rect x="599.15" y="0.25" width="10.50" height="7.90" fill="#d45500"/><rect x="610.10" y="0.25" width="10.50" height="7.90" fill="#ff6600"/><rect x="621.05" y="0.25" width="10.50" height="7.90" fill="#ff7f2a"/><rect x="632.00" y="0.25" width="10.50" height="7.90" fill="#ff9955"/><rect x="642.95" y="0.25" width="10.50" height="7.90" fill="#ffb380"/><rect x="653.90" y="0.25" width="10.50" height="7.90" fill="#ffccaa"/><rect x="664.85" y="0.25" width="10.50" height="7.90" fill="#ffe6d5"/><rect x="675.80" y="0.25" width="10.50" height="7.90" fill="#28170b"/><rect x="686.75" y="0.25" width="10.50" height="7.90" fill="#502d16"/><rect x="697.70" y="0.25" width="10.50" height="7.90" fill="#784421"/><rect x="708.65" y="0.25" width="10.50" height="7.90" fill="#a05a2c"/><rect x="719.60" y="0.25" width="10.50" height="7.90" fill="#c87137"/><rect x="730.55" y="0.25" width="10.50" height="7.90" fill="#d38d5f"/><rect x="741.50" y="0.25" width="10.50" height="7.90" fill="#deaa87"/><rect x="752.45" y="0.25" width="10.50" height="7.90" fill="#e9c6af"/><rect x="763.40" y="0.25" width="10.50" height="7.90" fill="#f4e3d7"/><rect x="774.35" y="0.25" width="10.50" height="7.90" fill="#241f1c"/><rect x="785.30" y="0.25" width="10.50" height="7.90" fill="#483e37"/><rect x="796.25" y="0.25" width="10.50" height="7.90" fill="#6c5d53"/><rect x="807.20" y="0.25" width="10.50" height="7.90" fill="#917c6f"/><rect x="818.15" y="0.25" width="10.50" height="7.90" fill="#ac9d93"/><rect x="829.10" y="0.25" width="10.50" height="7.90" fill="#c8beb7"/><rect x="840.05" y="0.25" width="10.50" height="7.90" fill="#e3dedb"/><rect x="851.00" y="0.25" width="10.50" height="7.90" fill="#2b2200"/><rect x="861.95" y="0.25" width="10.50" height="7.90" fill="#554400"/><rect x="872.90" y="0.25" width="10.50" height="7.90" fill="#806600"/><rect x="883.85" y="0.25" width="10.50" height="7.90" fill="#aa8800"/><rect x="0.50" y="8.55" width="10.99" height="8.85" fill="#d4aa00"/><rect x="11.94" y="8.55" width="10.99" height="8.85" fill="#ffcc00"/><rect x="23.38" y="8.55" width="10.99" height="8.85" fill="#ffd42a"/><rect x="34.82" y="8.55" width="10.99" height="8.85" fill="#ffdd55"/><rect x="46.26" y="8.55" width="10.99" height="8.85" fill="#ffe680"/><rect x="57.70" y="8.55" width="10.99" height="8.85" fill="#ffeeaa"/><rect x="69.14" y="8.55" width="10.99" height="8.85" fill="#fff6d5"/><rect x="80.58" y="8.55" width="10.99" height="8.85" fill="#28220b"/><rect x="92.02" y="8.55" width="10.99" height="8.85" fill="#504416"/><rect x="103.46" y="8.55" width="10.99" height="8.85" fill="#786721"/><rect x="114.90" y="8.55" width="10.99" height="8.85" fill="#a0892c"/><rect x="126.34" y="8.55" width="10.99" height="8.85" fill="#c8ab37"/><rect x="137.78" y="8.55" width="10.99" height="8.85" fill="#d3bc5f"/><rect x="149.22" y="8.55" width="10.99" height="8.85" fill="#decd87"/><rect x="160.66" y="8.55" width="10.99" height="8.85" fill="#e9ddaf"/><rect x="172.10" y="8.55" width="10.50" height="8.85" fill="#f4eed7"/><rect x="183.05" y="8.55" width="10.50" height="8.85" fill="#24221c"/><rect x="194.00" y="8.55" width="10.50" height="8.85" fill="#484537"/><rect x="204.95" y="8.55" width="10.50" height="8.85" fill="#6c6753"/><rect x="215.90" y="8.55" width="10.50" height="8.85" fill="#918a6f"/><rect x="226.85" y="8.55" width="10.50" height="8.85" fill="#aca793"/><rect x="237.80" y="8.55" width="10.50" height="8.85" fill="#c8c4b7"/><rect x="248.75" y="8.55" width="10.50" height="8.85" fill="#e3e2db"/><rect x="259.70" y="8.55" width="10.50" height="8.85" fill="#222b00"/><rect x="270.65" y="8.55" width="10.50" height="8.85" fill="#445500"/><rect x="281.60" y="8.55" width="10.50" height="8.85" fill="#668000"/><rect x="292.55" y="8.55" width="10.50" height="8.85" fill="#88aa00"/><rect x="303.50" y="8.55" width="10.50" height="8.85" fill="#aad400"/><rect x="314.45" y="8.55" width="10.50" height="8.85" fill="#ccff00"/><rect x="325.40" y="8.55" width="10.50" height="8.85" fill="#d4ff2a"/><rect x="336.35" y="8.55" width="10.50" height="8.85" fill="#ddff55"/><rect x="347.30" y="8.55" width="10.50" height="8.85" fill="#e5ff80"/><rect x="358.25" y="8.55" width="10.50" height="8.85" fill="#eeffaa"/><rect x="369.20" y="8.55" width="10.50" height="8.85" fill="#f6ffd5"/><rect x="380.15" y="8.55" width="10.50" height="8.85" fill="#22280b"/><rect x="391.10" y="8.55" width="10.50" height="8.85" fill="#445016"/><rect x="402.05" y="8.55" width="10.50" height="8.85" fill="#677821"/><rect x="413.00" y="8.55" width="10.50" height="8.85" fill="#89a02c"/><rect x="423.95" y="8.55" width="10.50" height="8.85" fill="#abc837"/><rect x="434.90" y="8.55" width="10.50" height="8.85" fill="#bcd35f"/><rect x="445.85" y="8.55" width="10.50" height="8.85" fill="#cdde87"/><rect x="456.80" y="8.55" width="10.50" height="8.85" fill="#dde9af"/><rect x="467.75" y="8.55" width="10.50" height="8.85" fill="#eef4d7"/><rect x="478.70" y="8.55" width="10.50" height="8.85" fill="#22241c"/><rect x="489.65" y="8.55" width="10.50" height="8.85" fill="#454837"/><rect x="500.60" y="8.55" width="10.50" height="8.85" fill="#676c53"/><rect x="511.55" y="8.55" width="10.50" height="8.85" fill="#8a916f"/><rect x="522.50" y="8.55" width="10.50" height="8.85" fill="#a7ac93"/><rect x="533.45" y="8.55" width="10.50" height="8.85" fill="#c4c8b7"/><rect x="544.40" y="8.55" width="10.50" height="8.85" fill="#e2e3db"/><rect x="555.35" y="8.55" width="10.50" height="8.85" fill="#112b00"/><rect x="566.30" y="8.55" width="10.50" height="8.85" fill="#225500"/><rect x="577.25" y="8.55" width="10.50" height="8.85" fill="#338000"/><rect x="588.20" y="8.55" width="10.50" height="8.85" fill="#44aa00"/><rect x="599.15" y="8.55" width="10.50" height="8.85" fill="#55d400"/><rect x="610.10" y="8.55" width="10.50" height="8.85" fill="#66ff00"/><rect x="621.05" y="8.55" width="10.50" height="8.85" fill="#7fff2a"/><rect x="632.00" y="8.55" width="10.50" height="8.85" fill="#99ff55"/><rect x="642.95" y="8.55" width="10.50" height="8.85" fill="#b3ff80"/><rect x="653.90" y="8.55" width="10.50" height="8.85" fill="#ccffaa"/><rect x="664.85" y="8.55" width="10.50" height="8.85" fill="#e5ffd5"/><rect x="675.80" y="8.55" width="10.50" height="8.85" fill="#17280b"/><rect x="686.75" y="8.55" width="10.50" height="8.85" fill="#2d5016"/><rect x="697.70" y="8.55" width="10.50" height="8.85" fill="#447821"/><rect x="708.65" y="8.55" width="10.50" height="8.85" fill="#5aa02c"/><rect x="719.60" y="8.55" width="10.50" height="8.85" fill="#71c837"/><rect x="730.55" y="8.55" width="10.50" height="8.85" fill="#8dd35f"/><rect x="741.50" y="8.55" width="10.50" height="8.85" fill="#aade87"/><rect x="752.45" y="8.55" width="10.50" height="8.85" fill="#c6e9af"/><rect x="763.40" y="8.55" width="10.50" height="8.85" fill="#e3f4d7"/><rect x="774.35" y="8.55" width="10.50" height="8.85" fill="#1f241c"/><rect x="785.30" y="8.55" width="10.50" height="8.85" fill="#3e4837"/><rect x="796.25" y="8.55" width="10.50" height="8.85" fill="#5d6c53"/><rect x="807.20" y="8.55" width="10.50" height="8.85" fill="#7c916f"/><rect x="818.15" y="8.55" width="10.50" height="8.85" fill="#9dac93"/><rect x="829.10" y="8.55" width="10.50" height="8.85" fill="#bec8b7"/><rect x="840.05" y="8.55" width="10.50" height="8.85" fill="#dee3db"/><rect x="851.00" y="8.55" width="10.50" height="8.85" fill="#002b00"/><rect x="861.95" y="8.55" width="10.50" height="8.85" fill="#005500"/><rect x="872.90" y="8.55" width="10.50" height="8.85" fill="#008000"/><rect x="883.85" y="8.55" width="10.50" height="8.85" fill="#00aa00"/><circle cx="221.18" cy="4.30" r="1.3" fill="#e4e4f4"/></svg>
<svg class="r" style="left:967.50px;top:497.00px;" width="8" height="5.6" viewBox="0 0 8 5.6"><path d="M0.8 4.6 L4 1 L7.2 4.6" fill="none" stroke="#6e6e6e" stroke-width="1"/></svg>
<svg class="r" style="left:979.30px;top:497.00px;" width="8" height="5.6" viewBox="0 0 8 5.6"><path d="M0.8 1 L4 4.6 L7.2 1" fill="none" stroke="#f0f0f0" stroke-width="1.2"/></svg>
<div class="r" style="left:990.80px;top:497.40px;width:7.60px;height:1.30px;background:#eaeaea;"></div>
<div class="r" style="left:990.80px;top:499.90px;width:7.60px;height:1.30px;background:#eaeaea;"></div>
<div class="r" style="left:990.80px;top:502.40px;width:7.60px;height:1.30px;background:#eaeaea;"></div>
<div class="r" style="left:0.00px;top:509.60px;width:1000.00px;height:20.40px;background:#353535;"></div>
<div class="t" style="left:12.00px;top:509.70px;font-size:8.60px;line-height:12px;color:#c4c4c4;transform-origin:0 50%;transform:scaleX(0.8224);">Fill:</div>
<div class="r" style="left:33.30px;top:510.20px;width:26.00px;height:9.60px;background:#00008b;"></div>
<div class="t" style="left:0.30px;top:520.50px;font-size:8.60px;line-height:12px;color:#c4c4c4;transform-origin:0 50%;transform:scaleX(0.8442);">Stroke:</div>
<div class="r" style="left:33.30px;top:521.20px;width:26.00px;height:9.00px;background:#000000;"></div>
<div class="t" style="left:63.50px;top:520.50px;font-size:8.60px;line-height:12px;color:#d0d0d0;transform-origin:0 50%;transform:scaleX(0.8735);">0.200</div>
<div class="t" style="left:85.00px;top:515.00px;font-size:8.60px;line-height:12px;color:#d0d0d0;transform-origin:0 50%;transform:scaleX(0.8812);">O:</div>
<div class="r" style="left:96.00px;top:512.50px;width:36.00px;height:17.50px;background:#2f2f2f;border-radius:2.5px;"></div>
<div class="t" style="left:99.50px;top:515.00px;font-size:8.60px;line-height:12px;color:#e4e4e4;transform-origin:0 50%;transform:scaleX(0.8572);">100</div>
<div class="r" style="left:116.00px;top:520.80px;width:6.40px;height:1.20px;background:#ececec;"></div>
<div class="r" style="left:124.90px;top:520.80px;width:6.20px;height:1.20px;background:#585858;"></div>
<div class="r" style="left:127.40px;top:518.30px;width:1.20px;height:6.20px;background:#585858;"></div>
<div class="r" style="left:138.60px;top:514.60px;width:1.20px;height:13.00px;background:#2a6fd6;"></div>
<div class="t" style="left:143.80px;top:515.00px;font-size:8.60px;line-height:12px;color:#d8d8d8;transform-origin:0 50%;transform:scaleX(0.8192);">Layer 1</div>
<svg class="r" style="left:177.50px;top:516.50px;" width="9" height="9" viewBox="0 0 9 9"><path d="M0.8 5 C2.4 2.4 6.6 2.4 8.2 5 C6.6 7.6 2.4 7.6 0.8 5Z" fill="none" stroke="#e8e8e8" stroke-width="1"/><circle cx="4.5" cy="5" r="1.3" fill="#e8e8e8"/><path d="M2 2.6 L2.6 3.4 M4.5 1.8 V2.8 M7 2.6 L6.4 3.4" stroke="#e8e8e8" stroke-width="0.7"/></svg>
<svg class="r" style="left:196.00px;top:516.20px;" width="9" height="9" viewBox="0 0 9 9"><rect x="1" y="4.2" width="6" height="4.2" rx="0.5" fill="#ececec"/><path d="M4.6 4.2 V2.8 A1.6 1.6 0 0 1 7.8 2.8 V3.4" fill="none" stroke="#ececec" stroke-width="1"/></svg>
<div class="t" style="left:215px;top:514.8px;font-size:8.6px;line-height:13px;color:#d4d4d4;transform-origin:0 50%;transform:scaleX(0.8856);"><b>Drag</b> to create a rectangle. <b>Drag controls</b> to round corners and resize. <b>Click</b> to select.</div>
<svg class="r" style="left:780.50px;top:518.20px;" width="5" height="6.4" viewBox="0 0 5 6.4"><path d="M4.2 0.6 V5.8 L0.8 3.2Z" fill="#7c7c7c"/></svg>
<div class="r" style="left:790.00px;top:510.50px;width:21.50px;height:19.50px;background:#313131;border-left:0.6px solid #3e3e3e;border-right:0.6px solid #3e3e3e;box-sizing:border-box;"></div>
<svg class="r" style="left:797.40px;top:519.40px;" width="6.4" height="4.4" viewBox="0 0 6.4 4.4"><path d="M0.3 0.5 H6.1 L3.2 4Z" fill="#9a9a9a"/></svg>
<svg class="r" style="left:816.50px;top:518.20px;" width="5" height="6.4" viewBox="0 0 5 6.4"><path d="M0.8 0.6 V5.8 L4.2 3.2Z" fill="#7c7c7c"/></svg>
<div class="t" style="left:832.30px;top:509.50px;font-size:8.60px;line-height:12px;color:#d0d0d0;transform-origin:0 50%;transform:scaleX(0.8122);">X:</div>
<div class="t" style="left:845.30px;top:509.50px;font-size:8.60px;line-height:12px;color:#d8d8d8;transform-origin:0 50%;transform:scaleX(0.8744);">358.47</div>
<div class="t" style="left:832.30px;top:520.30px;font-size:8.60px;line-height:12px;color:#d0d0d0;transform-origin:0 50%;transform:scaleX(0.8626);">Y:</div>
<div class="t" style="left:845.30px;top:520.30px;font-size:8.60px;line-height:12px;color:#d8d8d8;transform-origin:0 50%;transform:scaleX(0.8744);">106.43</div>
<div class="t" style="left:874.50px;top:515.00px;font-size:8.60px;line-height:12px;color:#d0d0d0;transform-origin:0 50%;transform:scaleX(0.9159);">Z:</div>
<div class="r" style="left:884.50px;top:511.50px;width:47.00px;height:18.50px;background:#2f2f2f;border-radius:2.5px;"></div>
<div class="t" style="left:891.00px;top:515.00px;font-size:8.60px;line-height:12px;color:#e4e4e4;transform-origin:0 50%;transform:scaleX(0.8482);">69%</div>
<div class="r" style="left:912.50px;top:520.80px;width:6.40px;height:1.20px;background:#ececec;"></div>
<div class="r" style="left:922.10px;top:520.80px;width:6.20px;height:1.20px;background:#ffffff;"></div>
<div class="r" style="left:924.60px;top:518.30px;width:1.20px;height:6.20px;background:#ffffff;"></div>
<div class="t" style="left:935.20px;top:515.00px;font-size:8.60px;line-height:12px;color:#d0d0d0;transform-origin:0 50%;transform:scaleX(0.8140);">R:</div>
<div class="r" style="left:944.50px;top:511.50px;width:54.00px;height:18.50px;background:#2f2f2f;border-radius:2.5px;"></div>
<div class="t" style="left:953.70px;top:515.00px;font-size:8.60px;line-height:12px;color:#e4e4e4;transform-origin:0 50%;transform:scaleX(0.8822);">0.00°</div>
<div class="r" style="left:978.30px;top:520.80px;width:6.40px;height:1.20px;background:#ececec;"></div>
<div class="r" style="left:987.50px;top:520.80px;width:6.20px;height:1.20px;background:#ffffff;"></div>
<div class="r" style="left:990.00px;top:518.30px;width:1.20px;height:6.20px;background:#ffffff;"></div>
</body></html>
